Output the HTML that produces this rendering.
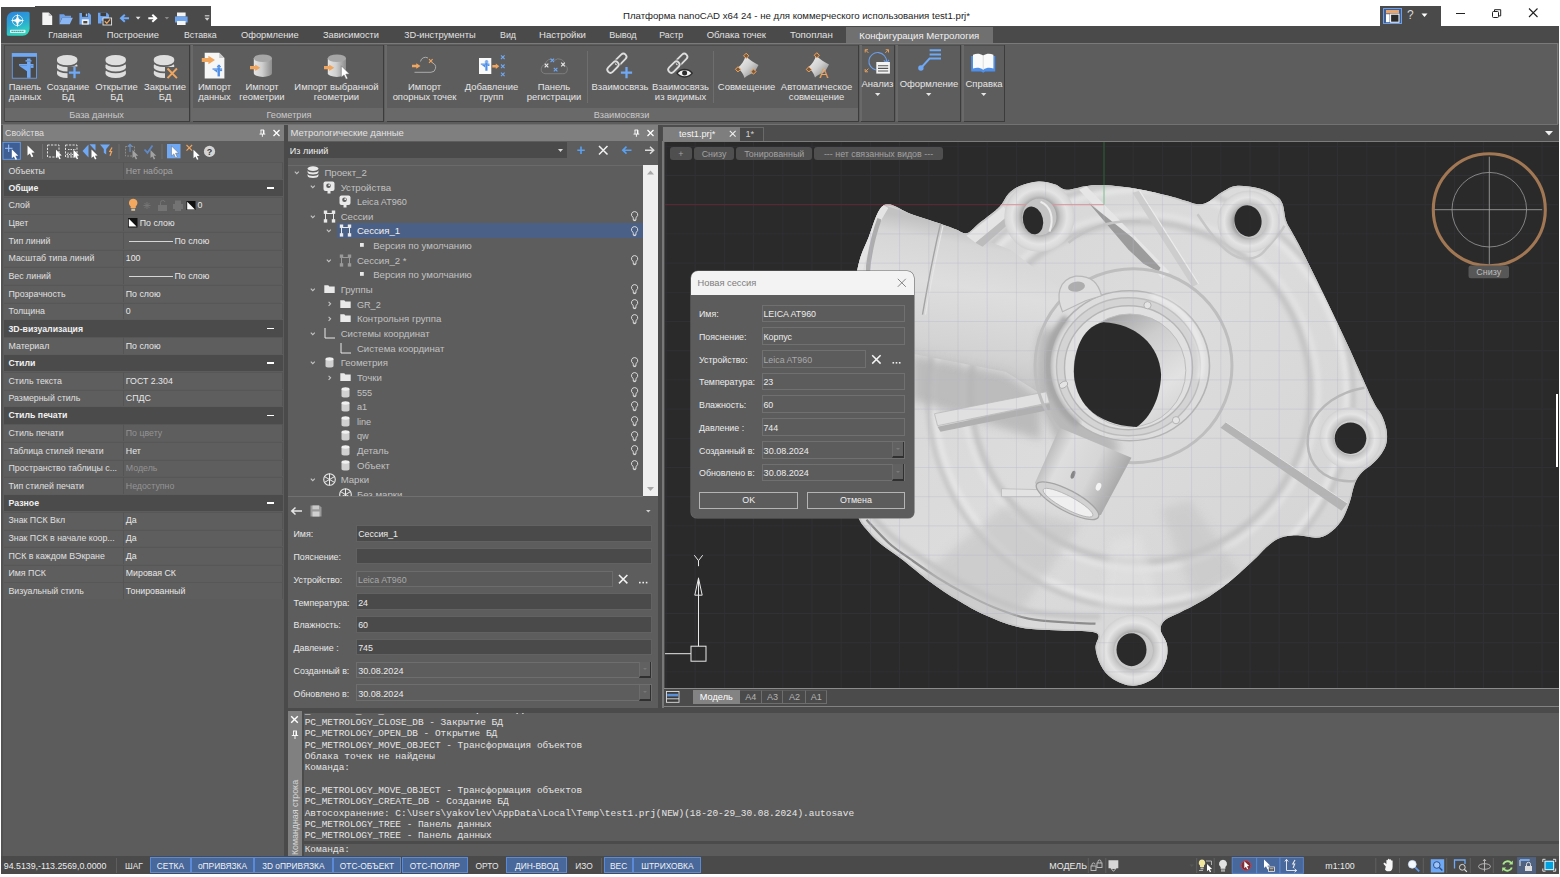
<!DOCTYPE html>
<html lang="ru"><head><meta charset="utf-8"><title>nanoCAD</title>
<style>
*{box-sizing:border-box;margin:0;padding:0}
html,body{width:1560px;height:877px;overflow:hidden;background:#fff}
body{position:relative;font-family:"Liberation Sans",sans-serif;font-size:9.5px;color:#e4e4e4;-webkit-font-smoothing:antialiased}
.a{position:absolute}
.t{position:absolute;white-space:nowrap;line-height:12px}
.c{text-align:center}
svg{position:absolute;overflow:visible}
</style></head>
<body>
<!-- p1_ribbon -->
<div class="a" style="left:1px;top:6px;width:1559px;height:868.4px;background:#4a4a4a;"></div>
<div class="a" style="left:211px;top:0px;width:1349px;height:26px;background:#fff;"></div>
<div class="a" style="left:0px;top:0px;width:1560px;height:5.5px;background:#fff;"></div>
<div class="a" style="left:0px;top:5px;width:35px;height:1.5px;background:#fff;"></div>
<div class="a" style="left:1380px;top:5.5px;width:61px;height:21px;background:#4a4a4a;"></div>
<div class="a" style="left:1383px;top:8px;width:19px;height:16px;background:#3f5f94;border:1px solid #6d9ee6"></div>
<svg style="left:1385px;top:9px" width="15" height="14" viewBox="0 0 15 14"><rect x="1" y="1" width="13" height="3.4" fill="#e9a56a"/><rect x="1" y="5.2" width="3.6" height="8" fill="#fff"/><rect x="5.6" y="5.2" width="8.4" height="8" fill="#2c2c2c" stroke="#fff" stroke-width="1"/></svg>
<div class="t" style="left:1407px;top:8.5px;font-size:12px;color:#d8d8d8;">?</div>
<svg style="left:1421px;top:13px" width="8" height="5"><path d="M0.5 0.5h6l-3 3.6z" fill="#fff"/></svg>
<svg style="left:1455px;top:7px" width="90" height="14"><path d="M1 6.5h9" stroke="#222" stroke-width="1"/><rect x="37.5" y="4.5" width="6" height="6" fill="none" stroke="#222" rx="1"/><path d="M39.5 4.3v-1.6h6.2v6.2h-1.8" fill="none" stroke="#222"/><path d="M74 1.5l8.5 8.5M82.5 1.5l-8.5 8.5" stroke="#222" stroke-width="1.1"/></svg>
<div class="t" style="left:546.5px;top:9.6px;width:500px;text-align:center;font-size:9.65px;color:#1c1c1c;">Платформа nanoCAD x64 24 - не для коммерческого использования test1.prj*</div>
<div class="a" style="left:845.7px;top:27px;width:147px;height:16.5px;background:#707070;"></div>
<div class="t" style="left:48.3px;top:29.3px;font-size:8.85px;color:#e2e2e2;">Главная</div>
<div class="t" style="left:106.7px;top:29.3px;font-size:9.39px;color:#e2e2e2;">Построение</div>
<div class="t" style="left:184px;top:29.3px;font-size:8.8px;color:#e2e2e2;">Вставка</div>
<div class="t" style="left:241px;top:29.3px;font-size:9.3px;color:#e2e2e2;">Оформление</div>
<div class="t" style="left:323px;top:29.3px;font-size:9.23px;color:#e2e2e2;">Зависимости</div>
<div class="t" style="left:404.3px;top:29.3px;font-size:9.29px;color:#e2e2e2;">3D-инструменты</div>
<div class="t" style="left:500px;top:29.3px;font-size:8.84px;color:#e2e2e2;">Вид</div>
<div class="t" style="left:539px;top:29.3px;font-size:9.59px;color:#e2e2e2;">Настройки</div>
<div class="t" style="left:609.3px;top:29.3px;font-size:9.06px;color:#e2e2e2;">Вывод</div>
<div class="t" style="left:659.3px;top:29.3px;font-size:8.8px;color:#e2e2e2;">Растр</div>
<div class="t" style="left:706.7px;top:29.3px;font-size:9.51px;color:#e2e2e2;">Облака точек</div>
<div class="t" style="left:790px;top:29.3px;font-size:9.7px;color:#e2e2e2;">Топоплан</div>
<div class="t" style="left:859.3px;top:29.5px;font-size:9.59px;color:#f2f2f2;">Конфигурация Метрология</div>
<div class="a" style="left:1px;top:43px;width:1559px;height:81px;background:#5d5d5d;"></div>
<div class="a" style="left:1px;top:43px;width:1557px;height:1px;background:#7a7a7a;"></div>
<div class="a" style="left:1556.9px;top:43px;width:1px;height:81.5px;background:#7a7a7a;"></div>
<div class="a" style="left:1px;top:123.5px;width:1557px;height:1.4px;background:#727272;"></div>
<div class="a" style="left:1px;top:124.9px;width:1559px;height:0.6px;background:#4c4c4c;"></div>
<div class="a" style="left:4px;top:44.5px;width:186.2px;height:77.8px;background:#5d5d5d;"></div>
<div class="a" style="left:4px;top:108.3px;width:186.2px;height:12.5px;background:#696969;"></div>
<div class="a" style="left:4px;top:44.5px;width:186.2px;height:1px;background:#4e4e4e;"></div>
<div class="a" style="left:189.0px;top:44.5px;width:1.2px;height:77.8px;background:#3c3c3c;"></div>
<div class="a" style="left:4px;top:120.8px;width:186.2px;height:1.5px;background:#3c3c3c;"></div>
<div class="a" style="left:3.5px;top:44.5px;width:1px;height:77.8px;background:#4a4a4a;"></div>
<div class="a" style="left:192.6px;top:44.5px;width:191.6px;height:77.8px;background:#5d5d5d;"></div>
<div class="a" style="left:192.6px;top:108.3px;width:191.6px;height:12.5px;background:#696969;"></div>
<div class="a" style="left:192.6px;top:44.5px;width:191.6px;height:1px;background:#4e4e4e;"></div>
<div class="a" style="left:383.0px;top:44.5px;width:1.2px;height:77.8px;background:#3c3c3c;"></div>
<div class="a" style="left:192.6px;top:120.8px;width:191.6px;height:1.5px;background:#3c3c3c;"></div>
<div class="a" style="left:191.2px;top:45px;width:2.2px;height:76px;background:#696969;"></div>
<div class="a" style="left:386.6px;top:44.5px;width:472.6px;height:77.8px;background:#5d5d5d;"></div>
<div class="a" style="left:386.6px;top:108.3px;width:472.6px;height:12.5px;background:#696969;"></div>
<div class="a" style="left:386.6px;top:44.5px;width:472.6px;height:1px;background:#4e4e4e;"></div>
<div class="a" style="left:858.0px;top:44.5px;width:1.2px;height:77.8px;background:#3c3c3c;"></div>
<div class="a" style="left:386.6px;top:120.8px;width:472.6px;height:1.5px;background:#3c3c3c;"></div>
<div class="a" style="left:385.20000000000005px;top:45px;width:2.2px;height:76px;background:#696969;"></div>
<div class="a" style="left:861.2px;top:44.5px;width:34.19999999999993px;height:77.8px;background:#5d5d5d;"></div>
<div class="a" style="left:861.2px;top:44.5px;width:34.19999999999993px;height:1px;background:#4e4e4e;"></div>
<div class="a" style="left:894.1999999999999px;top:44.5px;width:1.2px;height:77.8px;background:#3c3c3c;"></div>
<div class="a" style="left:861.2px;top:120.8px;width:34.19999999999993px;height:1.5px;background:#3c3c3c;"></div>
<div class="a" style="left:859.8000000000001px;top:45px;width:2.2px;height:76px;background:#696969;"></div>
<div class="a" style="left:897.6px;top:44.5px;width:63.799999999999955px;height:77.8px;background:#5d5d5d;"></div>
<div class="a" style="left:897.6px;top:44.5px;width:63.799999999999955px;height:1px;background:#4e4e4e;"></div>
<div class="a" style="left:960.1999999999999px;top:44.5px;width:1.2px;height:77.8px;background:#3c3c3c;"></div>
<div class="a" style="left:897.6px;top:120.8px;width:63.799999999999955px;height:1.5px;background:#3c3c3c;"></div>
<div class="a" style="left:896.2px;top:45px;width:2.2px;height:76px;background:#696969;"></div>
<div class="a" style="left:963.6px;top:44.5px;width:41.299999999999955px;height:77.8px;background:#5d5d5d;"></div>
<div class="a" style="left:963.6px;top:44.5px;width:41.299999999999955px;height:1px;background:#4e4e4e;"></div>
<div class="a" style="left:1003.6999999999999px;top:44.5px;width:1.2px;height:77.8px;background:#3c3c3c;"></div>
<div class="a" style="left:963.6px;top:120.8px;width:41.299999999999955px;height:1.5px;background:#3c3c3c;"></div>
<div class="a" style="left:962.2px;top:45px;width:2.2px;height:76px;background:#696969;"></div>
<div class="t" style="left:-3.5px;top:109px;width:200px;text-align:center;font-size:9.2px;color:#c9c9c9;">База данных</div>
<div class="t" style="left:189.0px;top:109px;width:200px;text-align:center;font-size:9.2px;color:#c9c9c9;">Геометрия</div>
<div class="t" style="left:521.5px;top:109px;width:200px;text-align:center;font-size:9.2px;color:#c9c9c9;">Взаимосвязи</div>
<div class="a" style="left:586.8px;top:51px;width:1px;height:52px;background:#6e6e6e;"></div>
<div class="a" style="left:712.5px;top:51px;width:1px;height:52px;background:#6e6e6e;"></div>
<div class="t" style="left:-75.0px;top:80.6px;width:200px;text-align:center;font-size:9.45px;color:#e6e6e6;">Панель</div>
<div class="t" style="left:-75.0px;top:91.4px;width:200px;text-align:center;font-size:9.45px;color:#e6e6e6;">данных</div>
<div class="t" style="left:-32.0px;top:80.6px;width:200px;text-align:center;font-size:9.45px;color:#e6e6e6;">Создание</div>
<div class="t" style="left:-32.0px;top:91.4px;width:200px;text-align:center;font-size:9.45px;color:#e6e6e6;">БД</div>
<div class="t" style="left:16.5px;top:80.6px;width:200px;text-align:center;font-size:9.45px;color:#e6e6e6;">Открытие</div>
<div class="t" style="left:16.5px;top:91.4px;width:200px;text-align:center;font-size:9.45px;color:#e6e6e6;">БД</div>
<div class="t" style="left:65.0px;top:80.6px;width:200px;text-align:center;font-size:9.45px;color:#e6e6e6;">Закрытие</div>
<div class="t" style="left:65.0px;top:91.4px;width:200px;text-align:center;font-size:9.45px;color:#e6e6e6;">БД</div>
<div class="t" style="left:114.5px;top:80.6px;width:200px;text-align:center;font-size:9.45px;color:#e6e6e6;">Импорт</div>
<div class="t" style="left:114.5px;top:91.4px;width:200px;text-align:center;font-size:9.45px;color:#e6e6e6;">данных</div>
<div class="t" style="left:162.0px;top:80.6px;width:200px;text-align:center;font-size:9.45px;color:#e6e6e6;">Импорт</div>
<div class="t" style="left:162.0px;top:91.4px;width:200px;text-align:center;font-size:9.45px;color:#e6e6e6;">геометрии</div>
<div class="t" style="left:236.5px;top:80.6px;width:200px;text-align:center;font-size:9.45px;color:#e6e6e6;">Импорт выбранной</div>
<div class="t" style="left:236.5px;top:91.4px;width:200px;text-align:center;font-size:9.45px;color:#e6e6e6;">геометрии</div>
<div class="t" style="left:324.5px;top:80.6px;width:200px;text-align:center;font-size:9.45px;color:#e6e6e6;">Импорт</div>
<div class="t" style="left:324.5px;top:91.4px;width:200px;text-align:center;font-size:9.45px;color:#e6e6e6;">опорных точек</div>
<div class="t" style="left:391.5px;top:80.6px;width:200px;text-align:center;font-size:9.45px;color:#e6e6e6;">Добавление</div>
<div class="t" style="left:391.5px;top:91.4px;width:200px;text-align:center;font-size:9.45px;color:#e6e6e6;">групп</div>
<div class="t" style="left:454.0px;top:80.6px;width:200px;text-align:center;font-size:9.45px;color:#e6e6e6;">Панель</div>
<div class="t" style="left:454.0px;top:91.4px;width:200px;text-align:center;font-size:9.45px;color:#e6e6e6;">регистрации</div>
<div class="t" style="left:520.0px;top:80.6px;width:200px;text-align:center;font-size:9.45px;color:#e6e6e6;">Взаимосвязь</div>
<div class="t" style="left:580.5px;top:80.6px;width:200px;text-align:center;font-size:9.45px;color:#e6e6e6;">Взаимосвязь</div>
<div class="t" style="left:580.5px;top:91.4px;width:200px;text-align:center;font-size:9.45px;color:#e6e6e6;">из видимых</div>
<div class="t" style="left:646.5px;top:80.6px;width:200px;text-align:center;font-size:9.45px;color:#e6e6e6;">Совмещение</div>
<div class="t" style="left:716.5px;top:80.6px;width:200px;text-align:center;font-size:9.45px;color:#e6e6e6;">Автоматическое</div>
<div class="t" style="left:716.5px;top:91.4px;width:200px;text-align:center;font-size:9.45px;color:#e6e6e6;">совмещение</div>
<div class="t" style="left:777.5px;top:77.6px;width:200px;text-align:center;font-size:9.45px;color:#e6e6e6;">Анализ</div>
<svg style="left:874.5px;top:92.5px" width="6" height="4"><path d="M0 0h5.4l-2.7 3z" fill="#e6e6e6"/></svg>
<div class="t" style="left:829.0px;top:77.6px;width:200px;text-align:center;font-size:9.45px;color:#e6e6e6;">Оформление</div>
<svg style="left:926px;top:92.5px" width="6" height="4"><path d="M0 0h5.4l-2.7 3z" fill="#e6e6e6"/></svg>
<div class="t" style="left:884.0px;top:77.6px;width:200px;text-align:center;font-size:9.45px;color:#e6e6e6;">Справка</div>
<svg style="left:981px;top:92.5px" width="6" height="4"><path d="M0 0h5.4l-2.7 3z" fill="#e6e6e6"/></svg>
<!-- p1b_icons -->
<svg style="left:0;top:0" width="1560" height="125" viewBox="0 0 1560 125">
<defs><linearGradient id="gcyl" x1="0" x2="1" y1="0" y2="0"><stop offset="0" stop-color="#e4e4e4"/><stop offset="0.45" stop-color="#d0d0d0"/><stop offset="1" stop-color="#8c8c8c"/></linearGradient><linearGradient id="gpatch" x1="0" x2="1" y1="0" y2="1"><stop offset="0" stop-color="#f6f6f6"/><stop offset="0.5" stop-color="#cfcfcf"/><stop offset="1" stop-color="#7c7c7c"/></linearGradient><linearGradient id="gapp" x1="0" x2="0.300" y1="0" y2="1"><stop offset="0" stop-color="#2d86de"/><stop offset="0.55" stop-color="#2aa6d4"/><stop offset="1" stop-color="#2fd6bf"/></linearGradient></defs>
<path d="M13.800 11.800h14.300a1.500 1.500 0 0 1 1.500 1.500v15.400a7 7 0 0 1 -7 7h-14.300a1.500 1.500 0 0 1 -1.500-1.500v-15.400a7 7 0 0 1 7-7z" fill="url(#gapp)"/>
<circle cx="17.500" cy="20.500" r="5.200" fill="none" stroke="#e8f6ff" stroke-width="0.8"/><path d="M17.500 13.500l1.300 5.700l5.700 1.300l-5.700 1.300l-1.300 5.700l-1.300-5.700l-5.700-1.300l5.700-1.300z" fill="#fff"/><circle cx="17.500" cy="20.500" r="2.200" fill="#fff"/>
<rect x="10" y="29.800" width="15.500" height="3.200" rx="0.800" fill="#d8f4ee"/><path d="M11.500 31.400h12.500" stroke="#2a8f9a" stroke-width="1.200" stroke-dasharray="1.300 0.700"/>
<path d="M42.300 12.500h6.400l3.500 3.500v8.900h-9.900z" fill="#f4f4f4"/><path d="M48.700 12.500v3.500h3.500z" fill="#bdbdbd"/>
<path d="M59.500 14.200h4.500l1.200 1.500h5.800v2h-9l-2.500 6z" fill="#6f9fe6"/><path d="M62.300 17.700h10.500l-3 6.600h-10.500z" fill="#8ab6f4"/>
<path d="M79.400 13h9.600l2 2v9.600h-11.600z" fill="#6fa4ee"/><rect x="82" y="13" width="6" height="3.800" fill="#3d3d3d"/><rect x="85.800" y="13.600" width="1.500" height="2.600" fill="#9cc2f6"/><rect x="81.800" y="19.300" width="7" height="5.300" fill="#f0f0f0"/><rect x="83.300" y="21" width="4" height="2.400" fill="#4a4a4a"/>
<path d="M98 12.700h9l2 2v6h-11z" fill="#6fa4ee"/><rect x="100.500" y="12.700" width="5.600" height="3.400" fill="#3d3d3d"/><rect x="98" y="16" width="3.500" height="7.500" fill="#6fa4ee"/><rect x="103" y="18" width="8.600" height="7" fill="#3d3d3d" stroke="#e8e8e8" stroke-width="0.9"/><path d="M104.800 21.300l2 2l3.300-4" stroke="#f1a65f" stroke-width="1.300" fill="none"/>
<path d="M129 18.300h-7.500M124.800 14.800l-3.800 3.500l3.800 3.500" stroke="#6fa8f5" stroke-width="2" fill="none"/><path d="M135.700 16.800h4.800l-2.400 2.800z" fill="#e4e4e4"/>
<path d="M148.300 18.300h7.500M152.300 14.800l3.800 3.500l-3.800 3.500" stroke="#ffffff" stroke-width="2" fill="none"/><path d="M164.700 16.900h4.400l-2.200 2.600z" fill="#8a8a8a"/>
<rect x="177" y="12.500" width="8.600" height="4" fill="#f4f4f4"/><rect x="175" y="16.500" width="12.600" height="6" fill="#6fa4ee"/><rect x="177" y="21" width="8.600" height="4" fill="#f4f4f4"/>
<path d="M204.800 15.800h4.600" stroke="#cfcfcf" stroke-width="1.200"/><path d="M204.600 17.800h5l-2.500 3z" fill="#cfcfcf"/>
<rect x="12.300" y="53.600" width="24.200" height="24.600" fill="#4a4a4a" stroke="#6a9de8" stroke-width="0.9"/><rect x="11.900" y="53.200" width="25" height="3.600" fill="#6fa8f5"/>
<g fill="#6fa8f5"><rect x="27" y="58.500" width="3.500" height="1.600"/><rect x="25.500" y="60.100" width="6" height="1.500"/><path d="M19 64h14.500v1.700h-14.500z"/><path d="M19 65.700h8v5.600z"/><path d="M30.500 65.700h3v2.200h-3z"/><rect x="27" y="61.600" width="3.600" height="16.200"/></g>
<path d="M56.7 73.0a10.500 4.400 0 0 1 21 0v2.200a10.500 4.400 0 0 1 -21 0z" fill="#5e5e5e"/><path d="M57 71.7a10.200 4.200 0 0 1 20.400 0v2a10.200 4.200 0 0 1 -20.400 0z" fill="#dedede"/><path d="M56.7 66.7a10.500 4.400 0 0 1 21 0v2.200a10.500 4.400 0 0 1 -21 0z" fill="#5e5e5e"/><path d="M57 65.4a10.200 4.200 0 0 1 20.400 0v2a10.200 4.200 0 0 1 -20.400 0z" fill="#dedede"/><path d="M56.7 60.4a10.500 4.400 0 0 1 21 0v2.200a10.500 4.400 0 0 1 -21 0z" fill="#5e5e5e"/><path d="M57 59.1a10.200 4.200 0 0 1 20.400 0v2a10.200 4.200 0 0 1 -20.400 0z" fill="#dedede"/>
<path d="M105.2 73.0a10.500 4.400 0 0 1 21 0v2.200a10.500 4.400 0 0 1 -21 0z" fill="#5e5e5e"/><path d="M105.5 71.7a10.200 4.200 0 0 1 20.400 0v2a10.200 4.200 0 0 1 -20.400 0z" fill="#dedede"/><path d="M105.2 66.7a10.500 4.400 0 0 1 21 0v2.200a10.500 4.400 0 0 1 -21 0z" fill="#5e5e5e"/><path d="M105.5 65.4a10.200 4.200 0 0 1 20.400 0v2a10.200 4.200 0 0 1 -20.400 0z" fill="#dedede"/><path d="M105.2 60.4a10.500 4.400 0 0 1 21 0v2.200a10.500 4.400 0 0 1 -21 0z" fill="#5e5e5e"/><path d="M105.5 59.1a10.200 4.200 0 0 1 20.400 0v2a10.200 4.200 0 0 1 -20.400 0z" fill="#dedede"/>
<path d="M153.5 73.0a10.500 4.400 0 0 1 21 0v2.200a10.500 4.400 0 0 1 -21 0z" fill="#5e5e5e"/><path d="M153.8 71.7a10.200 4.200 0 0 1 20.400 0v2a10.200 4.200 0 0 1 -20.400 0z" fill="#dedede"/><path d="M153.5 66.7a10.500 4.400 0 0 1 21 0v2.200a10.500 4.400 0 0 1 -21 0z" fill="#5e5e5e"/><path d="M153.8 65.4a10.200 4.200 0 0 1 20.400 0v2a10.200 4.200 0 0 1 -20.400 0z" fill="#dedede"/><path d="M153.5 60.4a10.500 4.400 0 0 1 21 0v2.200a10.500 4.400 0 0 1 -21 0z" fill="#5e5e5e"/><path d="M153.8 59.1a10.200 4.200 0 0 1 20.400 0v2a10.200 4.200 0 0 1 -20.400 0z" fill="#dedede"/>
<rect x="67.500" y="66.500" width="13" height="12" fill="#5e5e5e"/><path d="M74.500 67v11.200M68.900 72.600h11.200" stroke="#6fa8f5" stroke-width="2.300"/>
<rect x="165" y="67" width="13" height="12" fill="#5e5e5e"/><path d="M167.500 68.500l9.400 9.600M176.900 68.500l-9.400 9.600" stroke="#f1a65f" stroke-width="1.900"/>
<path d="M204.700 52.800h14.500l5.200 5.200v20.500h-19.700z" fill="#f6f6f6"/><path d="M219.200 52.800v5.200h5.200z" fill="#c8c8c8"/>
<path d="M201.8 57.936h6.6v-2.2359999999999998l6.6 4.3l-6.6 4.3v-2.2359999999999998h-6.6z" fill="#f1a65f"/>
<g transform="translate(212.5 64.8) scale(0.8)" fill="#4f8fe8"><rect x="6.500" y="0" width="3" height="1.600"/><rect x="5.500" y="1.600" width="5" height="1.400"/><path d="M0 4.500h12v1.600h-12z"/><path d="M1 6.100h5l-0 3.800z"/><path d="M9.300 6.100h2.700v1.800h-2.700z"/><rect x="6.300" y="3" width="3" height="11.500"/></g>
<path d="M253.8 58.3v15a9.100 3.600 0 0 0 18.200 0v-15z" fill="url(#gcyl)"/><ellipse cx="262.90000000000003" cy="58.3" rx="9.100" ry="3.800" fill="#a6a6a6"/>
<path d="M250 66.116h5.15v-1.716l5.15 3.3l-5.15 3.3v-1.716h-5.15z" fill="#f1a65f"/>
<path d="M327.8 58.3v15a9.100 3.600 0 0 0 18.200 0v-15z" fill="url(#gcyl)"/><ellipse cx="336.90000000000003" cy="58.3" rx="9.100" ry="3.800" fill="#a6a6a6"/>
<path d="M324 66.116h5.15v-1.716l5.15 3.3l-5.15 3.3v-1.716h-5.15z" fill="#f1a65f"/>
<path d="M341.300 65.800l0 11.500l2.700-2.400l2 4.300l1.800-0.800l-2-4.200l3.600-0.300z" fill="#ffffff" stroke="#5a5a5a" stroke-width="0.500"/>
<path d="M414.500 72.300h16.500a4.800 4.800 0 0 0 1.500-9.300M420.500 61.500a5 5 0 0 1 7.500-3.500" stroke="#b4b4b4" stroke-width="0.9" fill="none"/>
<path d="M412 64.656h4.25v-1.456l4.25 2.8l-4.25 2.8v-1.456h-4.25z" fill="#f1a65f"/>
<path d="M429.0 59.2l3.6 3.6M432.6 59.2l-3.6 3.6" stroke="#f1a65f" stroke-width="1.1" fill="none"/>
<rect x="479" y="58" width="12.300" height="16" fill="#fafafa"/>
<g transform="translate(480.8 60.3) scale(0.72)" fill="#4f8fe8"><rect x="6.500" y="0" width="3" height="1.600"/><rect x="5.500" y="1.600" width="5" height="1.400"/><path d="M0 4.500h12v1.600h-12z"/><path d="M1 6.100h5l-0 3.800z"/><path d="M9.300 6.100h2.700v1.800h-2.700z"/><rect x="6.300" y="3" width="3" height="11.500"/></g>
<path d="M492.3 64.904h3.5v-1.4040000000000001l3.5 2.7l-3.5 2.7v-1.4040000000000001h-3.5z" fill="#f1a65f"/>
<path d="M501.0 55.400000000000006l3.6 3.6M504.6 55.400000000000006l-3.6 3.6" stroke="#6fa8f5" stroke-width="1.1" fill="none"/>
<path d="M501.0 64.5l3.6 3.6M504.6 64.5l-3.6 3.6" stroke="#6fa8f5" stroke-width="1.1" fill="none"/>
<path d="M501.0 72.60000000000001l3.6 3.6M504.6 72.60000000000001l-3.6 3.6" stroke="#6fa8f5" stroke-width="1.1" fill="none"/>
<path d="M545 73.700h17.500a4.300 4.300 0 0 0 2-8.300a6 6 0 0 0 -10-5a5.500 5.500 0 0 0 -9 4a4.700 4.700 0 0 0 -0.500 9.300z" stroke="#858585" stroke-width="0.8" fill="none"/>
<path d="M550.5 58.6l3.6 3.6M554.0999999999999 58.6l-3.6 3.6" stroke="#6fa8f5" stroke-width="1.1" fill="none"/>
<path d="M553.8000000000001 67.8l3.6 3.6M557.4 67.8l-3.6 3.6" stroke="#6fa8f5" stroke-width="1.1" fill="none"/>
<path d="M544.7 63.7l3.6 3.6M548.3 63.7l-3.6 3.6" stroke="#ececec" stroke-width="1.1" fill="none"/>
<path d="M561.2 62.7l3.6 3.6M564.8 62.7l-3.6 3.6" stroke="#ececec" stroke-width="1.1" fill="none"/>
<rect x="614.0999999999999" y="56.2" width="13.400" height="6.200" rx="3.100" transform="rotate(-45 620.8 59.300000000000004)" fill="none" stroke="#dedede" stroke-width="1.8"/><rect x="606.3" y="64.00000000000001" width="13.400" height="6.200" rx="3.100" transform="rotate(-45 613.0 67.10000000000001)" fill="none" stroke="#5d5d5d" stroke-width="3.8"/><rect x="606.3" y="64.00000000000001" width="13.400" height="6.200" rx="3.100" transform="rotate(-45 613.0 67.10000000000001)" fill="none" stroke="#dedede" stroke-width="1.8"/>
<rect x="620" y="66.500" width="13" height="12" fill="#5e5e5e" opacity="0"/><path d="M626.500 67v11.200M620.900 72.600h11.200" stroke="#6fa8f5" stroke-width="2.300"/>
<rect x="674.9999999999999" y="56.2" width="13.400" height="6.200" rx="3.100" transform="rotate(-45 681.6999999999999 59.300000000000004)" fill="none" stroke="#dedede" stroke-width="1.8"/><rect x="667.1999999999999" y="64.00000000000001" width="13.400" height="6.200" rx="3.100" transform="rotate(-45 673.9 67.10000000000001)" fill="none" stroke="#5d5d5d" stroke-width="3.8"/><rect x="667.1999999999999" y="64.00000000000001" width="13.400" height="6.200" rx="3.100" transform="rotate(-45 673.9 67.10000000000001)" fill="none" stroke="#dedede" stroke-width="1.8"/>
<path d="M677 73.200c3.500-5 11.700-5 15.200 0c-3.500 5-11.700 5-15.200 0z" fill="#f2f2f2" stroke="#2c2c2c" stroke-width="1.400"/><circle cx="684.600" cy="73" r="2.500" fill="#2c2c2c"/>
<path d="M745.5 56C749.5 60 754.5 63 758.5 65C756.5 69 754.5 72 753.5 73C749.5 74 746.5 76 744.5 78C743.5 74 740.5 70 737.5 68C741.5 65 744.5 60 745.5 56z" fill="url(#gpatch)"/>
<path d="M746.2 53.199999999999996l2.6 2.6l-2.6 2.6l-2.6 -2.6z" fill="#7a5a3c" stroke="#f1a65f" stroke-width="1"/>
<path d="M738 66.7l2.6 2.6l-2.6 2.6l-2.6 -2.6z" fill="#7a5a3c" stroke="#f1a65f" stroke-width="1"/>
<path d="M753.5 69.0l2.6 2.6l-2.6 2.6l-2.6 -2.6z" fill="#7a5a3c" stroke="#f1a65f" stroke-width="1"/>
<path d="M816 55.5C820 59.5 825 62.5 829 64.5C827 68.5 825 71.5 824 72.5C820 73.5 817 75.5 815 77.5C814 73.5 811 69.5 808 67.5C812 64.5 815 59.5 816 55.5z" fill="url(#gpatch)"/>
<path d="M816.8 52.699999999999996l2.6 2.6l-2.6 2.6l-2.6 -2.6z" fill="#7a5a3c" stroke="#f1a65f" stroke-width="1"/>
<path d="M808.8 66.80000000000001l2.6 2.6l-2.6 2.6l-2.6 -2.6z" fill="#7a5a3c" stroke="#f1a65f" stroke-width="1"/>
<text x="819.200" y="77.800" font-family="Liberation Sans, sans-serif" font-size="13.500" fill="#f1a65f">A</text>
<path d="M876 70a8.800 8.800 0 1 1 10.500-8" stroke="#6a9de8" stroke-width="1.100" fill="none"/><path d="M883.800 60.300l2.800 2.600l2.400-3" stroke="#6a9de8" stroke-width="1.100" fill="none"/>
<rect x="876.300" y="62" width="13.600" height="11.600" fill="#f4f4f4"/><path d="M878 65.800h10.200M878 68.400h10.200M878 71h10.200" stroke="#555" stroke-width="1.100"/>
<path d="M865.200 52.500v-2.800h2.800M865.400 49.900l3 3M888.500 52.500v-2.800h-2.800M888.300 49.900l-3 3M865.200 69v2.800h2.800M865.400 71.600l3-3" stroke="#f1a65f" stroke-width="0.9" fill="none"/>
<circle cx="920.900" cy="68" r="2.700" fill="#6fa8f5"/><path d="M920.900 68l8.700-9.500h11.400M929.600 50.300h11.400M929.600 54.500h11.400" stroke="#6fa8f5" stroke-width="1.900" fill="none"/>
<path d="M971.200 56h24v15.500h-10l-2 1.300l-2-1.300h-10z" fill="#4f8fe8"/><path d="M973 54.800c3.500-1.800 7-1.500 10.200 0.800c3.200-2.300 6.700-2.600 10.200-0.800v13.800c-3.500-1.200-7-1-10.200 1.200c-3.200-2.200-6.700-2.400-10.200-1.200z" fill="#fafafa"/><path d="M983.200 55.600v14" stroke="#cfcfcf" stroke-width="0.700"/>
</svg>
<!-- p2_props -->
<div class="a" style="left:1px;top:125.2px;width:283px;height:731px;background:#5c5c5c;"></div>
<div class="a" style="left:1px;top:125.2px;width:1.8px;height:731px;background:#525252;"></div>
<div class="a" style="left:2.5px;top:125.2px;width:281.5px;height:15.8px;background:#7f7f7f;"></div>
<div class="t" style="left:5px;top:127.4px;font-size:8.9px;color:#dedede;">Свойства</div>
<svg style="left:257px;top:128px" width="24" height="11"><path d="M3.600 2h3.400M4 2v4M6.800 2v4M2.500 6.100h5.800M5.400 6.100v2.700" stroke="#fff" stroke-width="0.9" fill="none"/><rect x="5.900" y="2.200" width="1.300" height="3.800" fill="#fff"/><path d="M16.5 2l6 6M22.5 2l-6 6" stroke="#fff" stroke-width="1.3"/></svg>
<div class="a" style="left:3px;top:141px;width:281px;height:20.5px;background:#5c5c5c;"></div>
<div class="a" style="left:3px;top:161.5px;width:281px;height:694px;background:#5c5c5c;"></div>
<div class="a" style="left:3.5px;top:162.1px;width:279.1px;height:16.75px;background:#5e5e5e;border-top:1px solid #575757;border-right:1px solid #545454"></div>
<div class="a" style="left:122.5px;top:162.1px;width:1px;height:16.75px;background:#555;"></div>
<div class="t" style="left:8.5px;top:164.7px;font-size:8.8px;color:#e0e0e0;">Объекты</div>
<div class="t" style="left:125.8px;top:164.7px;font-size:8.8px;color:#a4a4a4;">Нет набора</div>
<div class="a" style="left:3.5px;top:179.65px;width:279.1px;height:16.5px;background:#4b4b4b;"></div>
<div class="t" style="left:8.5px;top:181.95000000000002px;font-size:8.75px;color:#f0f0f0;font-weight:bold">Общие</div>
<div class="a" style="left:267px;top:187.15px;width:7px;height:1.4px;background:#fff;"></div>
<div class="a" style="left:3.5px;top:196.75px;width:279.1px;height:16.75px;background:#5e5e5e;border-top:1px solid #575757;border-right:1px solid #545454"></div>
<div class="a" style="left:122.5px;top:196.75px;width:1px;height:16.75px;background:#555;"></div>
<div class="t" style="left:8.5px;top:199.35px;font-size:8.8px;color:#e0e0e0;">Слой</div>
<svg style="left:127px;top:198.275px" width="80" height="14" viewBox="0 0 80 14"><path d="M6.2 0.8a4.2 4.2 0 0 1 2.6 7.5v1.6h-5.2v-1.6a4.2 4.2 0 0 1 2.6-7.5z" fill="#f3a85f"/><rect x="4.3" y="10.6" width="3.8" height="2.2" fill="#d8c09a"/><path d="M20 4v7M16.5 7.5h7M17.5 5l5 5M22.500 5l-5 5" stroke="#777" stroke-width="0.9"/><rect x="31" y="7" width="9" height="6" fill="#747474"/><path d="M33.500 7v-2.500a2.300 2.300 0 0 1 4.500-0.500" stroke="#747474" fill="none"/><rect x="46" y="6" width="10" height="5" fill="#737373"/><rect x="48" y="2.500" width="6" height="10.500" fill="#737373"/><rect x="59.500" y="3" width="9" height="9" fill="#111"/><path d="M60.200 3.700l7.800 7.800h-7.800z" fill="#fff"/></svg>
<div class="t" style="left:197.5px;top:199.35px;font-size:8.8px;color:#e8e8e8;">0</div>
<div class="a" style="left:3.5px;top:214.4px;width:279.1px;height:16.75px;background:#5e5e5e;border-top:1px solid #575757;border-right:1px solid #545454"></div>
<div class="a" style="left:122.5px;top:214.4px;width:1px;height:16.75px;background:#555;"></div>
<div class="t" style="left:8.5px;top:217.0px;font-size:8.8px;color:#e0e0e0;">Цвет</div>
<svg style="left:128px;top:218.425px" width="10" height="10"><rect x="0" y="0" width="9.500" height="9.500" fill="#111"/><path d="M0.800 0.800l7.800 7.800h-7.800z" fill="#fff"/></svg>
<div class="t" style="left:139.8px;top:217.0px;font-size:8.8px;color:#e8e8e8;">По слою</div>
<div class="a" style="left:3.5px;top:232.05px;width:279.1px;height:16.75px;background:#5e5e5e;border-top:1px solid #575757;border-right:1px solid #545454"></div>
<div class="a" style="left:122.5px;top:232.05px;width:1px;height:16.75px;background:#555;"></div>
<div class="t" style="left:8.5px;top:234.65px;font-size:8.8px;color:#e0e0e0;">Тип линий</div>
<div class="a" style="left:128.5px;top:240.57500000000002px;width:44.5px;height:1px;background:#d6d6d6;"></div>
<div class="t" style="left:174.5px;top:234.65px;font-size:8.8px;color:#e8e8e8;">По слою</div>
<div class="a" style="left:3.5px;top:249.70000000000002px;width:279.1px;height:16.75px;background:#5e5e5e;border-top:1px solid #575757;border-right:1px solid #545454"></div>
<div class="a" style="left:122.5px;top:249.70000000000002px;width:1px;height:16.75px;background:#555;"></div>
<div class="t" style="left:8.5px;top:252.3px;font-size:8.8px;color:#e0e0e0;">Масштаб типа линий</div>
<div class="t" style="left:125.8px;top:252.3px;font-size:8.8px;color:#e8e8e8;">100</div>
<div class="a" style="left:3.5px;top:267.35px;width:279.1px;height:16.75px;background:#5e5e5e;border-top:1px solid #575757;border-right:1px solid #545454"></div>
<div class="a" style="left:122.5px;top:267.35px;width:1px;height:16.75px;background:#555;"></div>
<div class="t" style="left:8.5px;top:269.95px;font-size:8.8px;color:#e0e0e0;">Вес линий</div>
<div class="a" style="left:128.5px;top:275.875px;width:44.5px;height:1px;background:#d6d6d6;"></div>
<div class="t" style="left:174.5px;top:269.95px;font-size:8.8px;color:#e8e8e8;">По слою</div>
<div class="a" style="left:3.5px;top:285.0px;width:279.1px;height:16.75px;background:#5e5e5e;border-top:1px solid #575757;border-right:1px solid #545454"></div>
<div class="a" style="left:122.5px;top:285.0px;width:1px;height:16.75px;background:#555;"></div>
<div class="t" style="left:8.5px;top:287.59999999999997px;font-size:8.8px;color:#e0e0e0;">Прозрачность</div>
<div class="t" style="left:125.8px;top:287.59999999999997px;font-size:8.8px;color:#e8e8e8;">По слою</div>
<div class="a" style="left:3.5px;top:302.65px;width:279.1px;height:16.75px;background:#5e5e5e;border-top:1px solid #575757;border-right:1px solid #545454"></div>
<div class="a" style="left:122.5px;top:302.65px;width:1px;height:16.75px;background:#555;"></div>
<div class="t" style="left:8.5px;top:305.24999999999994px;font-size:8.8px;color:#e0e0e0;">Толщина</div>
<div class="t" style="left:125.8px;top:305.24999999999994px;font-size:8.8px;color:#e8e8e8;">0</div>
<div class="a" style="left:3.5px;top:320.19999999999993px;width:279.1px;height:16.5px;background:#4b4b4b;"></div>
<div class="t" style="left:8.5px;top:322.49999999999994px;font-size:8.75px;color:#f0f0f0;font-weight:bold">3D-визуализация</div>
<div class="a" style="left:267px;top:327.69999999999993px;width:7px;height:1.4px;background:#fff;"></div>
<div class="a" style="left:3.5px;top:337.29999999999995px;width:279.1px;height:16.75px;background:#5e5e5e;border-top:1px solid #575757;border-right:1px solid #545454"></div>
<div class="a" style="left:122.5px;top:337.29999999999995px;width:1px;height:16.75px;background:#555;"></div>
<div class="t" style="left:8.5px;top:339.8999999999999px;font-size:8.8px;color:#e0e0e0;">Материал</div>
<div class="t" style="left:125.8px;top:339.8999999999999px;font-size:8.8px;color:#e8e8e8;">По слою</div>
<div class="a" style="left:3.5px;top:354.8499999999999px;width:279.1px;height:16.5px;background:#4b4b4b;"></div>
<div class="t" style="left:8.5px;top:357.1499999999999px;font-size:8.75px;color:#f0f0f0;font-weight:bold">Стили</div>
<div class="a" style="left:267px;top:362.3499999999999px;width:7px;height:1.4px;background:#fff;"></div>
<div class="a" style="left:3.5px;top:371.94999999999993px;width:279.1px;height:16.75px;background:#5e5e5e;border-top:1px solid #575757;border-right:1px solid #545454"></div>
<div class="a" style="left:122.5px;top:371.94999999999993px;width:1px;height:16.75px;background:#555;"></div>
<div class="t" style="left:8.5px;top:374.5499999999999px;font-size:8.8px;color:#e0e0e0;">Стиль текста</div>
<div class="t" style="left:125.8px;top:374.5499999999999px;font-size:8.8px;color:#e8e8e8;">ГОСТ 2.304</div>
<div class="a" style="left:3.5px;top:389.5999999999999px;width:279.1px;height:16.75px;background:#5e5e5e;border-top:1px solid #575757;border-right:1px solid #545454"></div>
<div class="a" style="left:122.5px;top:389.5999999999999px;width:1px;height:16.75px;background:#555;"></div>
<div class="t" style="left:8.5px;top:392.1999999999999px;font-size:8.8px;color:#e0e0e0;">Размерный стиль</div>
<div class="t" style="left:125.8px;top:392.1999999999999px;font-size:8.8px;color:#e8e8e8;">СПДС</div>
<div class="a" style="left:3.5px;top:407.14999999999986px;width:279.1px;height:16.5px;background:#4b4b4b;"></div>
<div class="t" style="left:8.5px;top:409.4499999999999px;font-size:8.75px;color:#f0f0f0;font-weight:bold">Стиль печати</div>
<div class="a" style="left:267px;top:414.64999999999986px;width:7px;height:1.4px;background:#fff;"></div>
<div class="a" style="left:3.5px;top:424.2499999999999px;width:279.1px;height:16.75px;background:#5e5e5e;border-top:1px solid #575757;border-right:1px solid #545454"></div>
<div class="a" style="left:122.5px;top:424.2499999999999px;width:1px;height:16.75px;background:#555;"></div>
<div class="t" style="left:8.5px;top:426.84999999999985px;font-size:8.8px;color:#e0e0e0;">Стиль печати</div>
<div class="t" style="left:125.8px;top:426.84999999999985px;font-size:8.8px;color:#949494;">По цвету</div>
<div class="a" style="left:3.5px;top:441.89999999999986px;width:279.1px;height:16.75px;background:#5e5e5e;border-top:1px solid #575757;border-right:1px solid #545454"></div>
<div class="a" style="left:122.5px;top:441.89999999999986px;width:1px;height:16.75px;background:#555;"></div>
<div class="t" style="left:8.5px;top:444.49999999999983px;font-size:8.8px;color:#e0e0e0;">Таблица стилей печати</div>
<div class="t" style="left:125.8px;top:444.49999999999983px;font-size:8.8px;color:#e8e8e8;">Нет</div>
<div class="a" style="left:3.5px;top:459.54999999999984px;width:279.1px;height:16.75px;background:#5e5e5e;border-top:1px solid #575757;border-right:1px solid #545454"></div>
<div class="a" style="left:122.5px;top:459.54999999999984px;width:1px;height:16.75px;background:#555;"></div>
<div class="t" style="left:8.5px;top:462.1499999999998px;font-size:8.8px;color:#e0e0e0;">Пространство таблицы с...</div>
<div class="t" style="left:125.8px;top:462.1499999999998px;font-size:8.8px;color:#949494;">Модель</div>
<div class="a" style="left:3.5px;top:477.1999999999998px;width:279.1px;height:16.75px;background:#5e5e5e;border-top:1px solid #575757;border-right:1px solid #545454"></div>
<div class="a" style="left:122.5px;top:477.1999999999998px;width:1px;height:16.75px;background:#555;"></div>
<div class="t" style="left:8.5px;top:479.7999999999998px;font-size:8.8px;color:#e0e0e0;">Тип стилей печати</div>
<div class="t" style="left:125.8px;top:479.7999999999998px;font-size:8.8px;color:#949494;">Недоступно</div>
<div class="a" style="left:3.5px;top:494.7499999999998px;width:279.1px;height:16.5px;background:#4b4b4b;"></div>
<div class="t" style="left:8.5px;top:497.0499999999998px;font-size:8.75px;color:#f0f0f0;font-weight:bold">Разное</div>
<div class="a" style="left:267px;top:502.2499999999998px;width:7px;height:1.4px;background:#fff;"></div>
<div class="a" style="left:3.5px;top:511.8499999999998px;width:279.1px;height:16.75px;background:#5e5e5e;border-top:1px solid #575757;border-right:1px solid #545454"></div>
<div class="a" style="left:122.5px;top:511.8499999999998px;width:1px;height:16.75px;background:#555;"></div>
<div class="t" style="left:8.5px;top:514.4499999999998px;font-size:8.8px;color:#e0e0e0;">Знак ПСК Вкл</div>
<div class="t" style="left:125.8px;top:514.4499999999998px;font-size:8.8px;color:#e8e8e8;">Да</div>
<div class="a" style="left:3.5px;top:529.4999999999998px;width:279.1px;height:16.75px;background:#5e5e5e;border-top:1px solid #575757;border-right:1px solid #545454"></div>
<div class="a" style="left:122.5px;top:529.4999999999998px;width:1px;height:16.75px;background:#555;"></div>
<div class="t" style="left:8.5px;top:532.0999999999998px;font-size:8.8px;color:#e0e0e0;">Знак ПСК в начале коор...</div>
<div class="t" style="left:125.8px;top:532.0999999999998px;font-size:8.8px;color:#e8e8e8;">Да</div>
<div class="a" style="left:3.5px;top:547.1499999999997px;width:279.1px;height:16.75px;background:#5e5e5e;border-top:1px solid #575757;border-right:1px solid #545454"></div>
<div class="a" style="left:122.5px;top:547.1499999999997px;width:1px;height:16.75px;background:#555;"></div>
<div class="t" style="left:8.5px;top:549.7499999999998px;font-size:8.8px;color:#e0e0e0;">ПСК в каждом ВЭкране</div>
<div class="t" style="left:125.8px;top:549.7499999999998px;font-size:8.8px;color:#e8e8e8;">Да</div>
<div class="a" style="left:3.5px;top:564.7999999999997px;width:279.1px;height:16.75px;background:#5e5e5e;border-top:1px solid #575757;border-right:1px solid #545454"></div>
<div class="a" style="left:122.5px;top:564.7999999999997px;width:1px;height:16.75px;background:#555;"></div>
<div class="t" style="left:8.5px;top:567.3999999999997px;font-size:8.8px;color:#e0e0e0;">Имя ПСК</div>
<div class="t" style="left:125.8px;top:567.3999999999997px;font-size:8.8px;color:#e8e8e8;">Мировая СК</div>
<div class="a" style="left:3.5px;top:582.4499999999997px;width:279.1px;height:16.75px;background:#5e5e5e;border-top:1px solid #575757;border-right:1px solid #545454"></div>
<div class="a" style="left:122.5px;top:582.4499999999997px;width:1px;height:16.75px;background:#555;"></div>
<div class="t" style="left:8.5px;top:585.0499999999997px;font-size:8.8px;color:#e0e0e0;">Визуальный стиль</div>
<div class="t" style="left:125.8px;top:585.0499999999997px;font-size:8.8px;color:#e8e8e8;">Тонированный</div>
<!-- p2b_ptool -->
<svg style="left:0;top:138px" width="230" height="28" viewBox="0 138 230 28">
<rect x="3" y="142.300" width="17.300" height="17" fill="#3f5f94" stroke="#6a9de8" stroke-width="0.9"/>
<path d="M8.700 144.500v7.500M5 148.300h7.500" stroke="#9cc4ff" stroke-width="1"/>
<path transform="translate(11.8 149.3) scale(0.95)" d="M0 0v9.500l2.200-2l1.700 3.600l1.600-0.700l-1.700-3.500l3-0.200z" fill="#ffffff"/>
<path transform="translate(27.5 145.5) scale(1.05)" d="M0 0v9.500l2.200-2l1.700 3.600l1.600-0.700l-1.700-3.500l3-0.200z" fill="#ffffff"/>
<path d="M42.5 144v15" stroke="#6e6e6e" stroke-width="1"/>
<path d="M119 144v15" stroke="#6e6e6e" stroke-width="1"/>
<path d="M162 144v15" stroke="#6e6e6e" stroke-width="1"/>
<rect x="47.500" y="145" width="11.500" height="12" fill="none" stroke="#e0e0e0" stroke-width="1" stroke-dasharray="2.200 1.300"/>
<path transform="translate(56 149.8) scale(0.85)" d="M0 0v9.500l2.200-2l1.700 3.600l1.600-0.700l-1.700-3.500l3-0.200z" fill="#ffffff"/>
<rect x="65.500" y="145" width="11.500" height="12" fill="none" stroke="#e0e0e0" stroke-width="1" stroke-dasharray="2.200 1.300"/><path d="M68 149.500h8M68 152.500v4M71 152.500v4M66.500 154.500h8" stroke="#d8d8d8" stroke-width="1.100" stroke-dasharray="1.500 1"/>
<path transform="translate(73.5 149.8) scale(0.85)" d="M0 0v9.500l2.200-2l1.700 3.600l1.600-0.700l-1.700-3.500l3-0.200z" fill="#ffffff"/>
<path d="M82.500 151l6-6.500v13z" fill="#6fa8f5"/><path d="M89.500 144.300h6v6.500z" fill="#6fa8f5"/><path d="M83 157.500h7l-7-6.800z" fill="#6fa8f5" opacity="0"/><path d="M89.500 158v-6.500l-6 6.500z" fill="#6fa8f5" opacity="0"/>
<path transform="translate(91.5 149.5) scale(0.9)" d="M0 0v9.500l2.200-2l1.700 3.600l1.600-0.700l-1.700-3.500l3-0.200z" fill="#ffffff"/>
<path d="M100 144.500h10l-3.800 4.500v5.500l-2.400-1.800v-3.700z" fill="#6fa8f5"/><path d="M112 147.500l-2.200 4h1.800l-1.600 4.300" stroke="#f1a65f" stroke-width="1.200" fill="none"/>
<rect x="125.500" y="146.500" width="9" height="9.500" fill="none" stroke="#8c8c8c" stroke-width="1" stroke-dasharray="1.800 1.200"/><path d="M130 152v-7.500M128 146.500l2-2.200l2 2.200" stroke="#6a8fc4" stroke-width="1.200" fill="none"/>
<path transform="translate(132.5 150) scale(0.85)" d="M0 0v9.500l2.200-2l1.700 3.600l1.600-0.700l-1.700-3.500l3-0.200z" fill="#a2a2a2"/>
<path d="M144.500 149.500l3 3.200l5-7.200" stroke="#5f89c6" stroke-width="1.800" fill="none"/>
<path transform="translate(150.5 150) scale(0.85)" d="M0 0v9.500l2.200-2l1.700 3.600l1.600-0.700l-1.700-3.500l3-0.200z" fill="#a2a2a2"/>
<rect x="167" y="144" width="13.500" height="14.300" fill="#6fa8f5"/>
<path transform="translate(171.5 146) scale(1.05)" d="M0 0v9.500l2.200-2l1.700 3.600l1.600-0.700l-1.700-3.500l3-0.200z" fill="#ffffff"/>
<path d="M171.500 146v9.975l2.310-2.100l1.785 3.780l1.680-0.735l-1.785-3.675l3.150-0.210z" fill="none" stroke="#666" stroke-width="0.500"/>
<path d="M186.500 145l5.600 5.600M192.100 145l-5.600 5.600" stroke="#f1a65f" stroke-width="1.100"/>
<path transform="translate(193.5 149.8) scale(0.9)" d="M0 0v9.500l2.200-2l1.700 3.600l1.600-0.700l-1.700-3.500l3-0.200z" fill="#ffffff"/>
<circle cx="209.500" cy="151.400" r="5.600" fill="#d4d4d4"/><text x="209.500" y="154.700" font-size="9" font-weight="bold" text-anchor="middle" fill="#3a3a3a" font-family="Liberation Sans, sans-serif">?</text>
</svg>
<!-- p3_metro -->
<div class="a" style="left:287.7px;top:125.2px;width:370.6px;height:582.7px;background:#5d5d5d;"></div>
<div class="a" style="left:287.7px;top:125.2px;width:371px;height:15.8px;background:#7f7f7f;"></div>
<div class="t" style="left:290.6px;top:127.3px;font-size:9.5px;color:#e2e2e2;">Метрологические данные</div>
<svg style="left:631px;top:128px" width="26" height="11"><path d="M3.600 2h3.400M4 2v4M6.800 2v4M2.500 6.100h5.800M5.400 6.100v2.700" stroke="#fff" stroke-width="0.9" fill="none"/><rect x="5.900" y="2.200" width="1.300" height="3.800" fill="#fff"/><path d="M16.500 2l6 6M22.500 2l-6 6" stroke="#fff" stroke-width="1.300"/></svg>
<div class="a" style="left:288px;top:141.8px;width:278.5px;height:16.2px;background:#4a4a4a;"></div>
<div class="t" style="left:289.8px;top:144.6px;font-size:9.0px;color:#f0f0f0;">Из линий</div>
<svg style="left:557.5px;top:149px" width="6" height="4"><path d="M0 0h5l-2.500 3z" fill="#d8d8d8"/></svg>
<svg style="left:572px;top:143px" width="86" height="15"><path d="M9 3.500v7.500M5.300 7.200h7.500" stroke="#5aa0f0" stroke-width="1.600"/><path d="M27 3l8.500 8.500M35.500 3l-8.500 8.500" stroke="#f2f2f2" stroke-width="1.500"/><path d="M51 7.200h8.500M54.500 3.700l-3.700 3.500l3.700 3.500" stroke="#5aa0f0" stroke-width="1.600" fill="none"/><path d="M73 7.200h8.500M78 3.700l3.700 3.500l-3.700 3.500" stroke="#dcdcdc" stroke-width="1.500" fill="none"/></svg>
<div class="a" style="left:288px;top:164.5px;width:355px;height:332px;background:#5d5d5d;border-top:1px solid #6a6a6a;border-bottom:1px solid #707070;overflow:hidden"></div>
<div class="a" style="left:643px;top:165px;width:14.7px;height:331px;background:#efefef;"></div>
<svg style="left:643px;top:165px" width="15" height="331"><path d="M4 9.500h7l-3.500-4z" fill="#a8a8a8"/><path d="M4 322h7l-3.500 4z" fill="#a8a8a8"/></svg>
<div class="a" style="left:0;top:0;width:643px;height:495.5px;overflow:hidden"><svg style="left:293.8px;top:170.7px" width="6" height="4"><path d="M0.800 0.600l2 2l2-2" stroke="#c4c4c4" stroke-width="1.100" fill="none"/></svg>
<svg style="left:306.8px;top:165.89999999999998px" width="12" height="13"><ellipse cx="6" cy="2.600" rx="5.400" ry="2.300" fill="#e9e9e9"/><path d="M0.600 4.200c0 3 10.800 3 10.800 0v2c0 3-10.800 3-10.800 0z" fill="#e9e9e9"/><path d="M0.600 7.800c0 3 10.800 3 10.800 0v2c0 3-10.800 3-10.800 0z" fill="#e9e9e9"/></svg>
<div class="t" style="left:324.4px;top:166.89999999999998px;font-size:9.65px;color:#c2c2c2;">Проект_2</div>
<svg style="left:310.05px;top:185.33999999999997px" width="6" height="4"><path d="M0.800 0.600l2 2l2-2" stroke="#c4c4c4" stroke-width="1.100" fill="none"/></svg>
<svg style="left:323.05px;top:180.53999999999996px" width="12" height="13"><rect x="0.500" y="0.500" width="11" height="9.500" rx="2" fill="#e9e9e9"/><circle cx="5.500" cy="4.800" r="2.300" fill="#5d5d5d"/><circle cx="6.200" cy="4.200" r="0.900" fill="#e9e9e9"/><path d="M4.500 10h3v2.500h-3z" fill="#e9e9e9"/></svg>
<div class="t" style="left:340.65px;top:181.53999999999996px;font-size:9.65px;color:#c2c2c2;">Устройства</div>
<svg style="left:339.3px;top:195.17999999999998px" width="12" height="13"><rect x="0.500" y="0.500" width="11" height="9.500" rx="2" fill="#e9e9e9"/><circle cx="5.500" cy="4.800" r="2.300" fill="#5d5d5d"/><circle cx="6.200" cy="4.200" r="0.900" fill="#e9e9e9"/><path d="M4.500 10h3v2.500h-3z" fill="#e9e9e9"/></svg>
<div class="t" style="left:356.9px;top:196.17999999999998px;font-size:9.15px;color:#c2c2c2;">Leica AT960</div>
<svg style="left:310.05px;top:214.62px" width="6" height="4"><path d="M0.800 0.600l2 2l2-2" stroke="#c4c4c4" stroke-width="1.100" fill="none"/></svg>
<svg style="left:322.55px;top:209.82px" width="13" height="13"><path d="M2.500 2v9M10.500 2v9M2.500 3.500h8" stroke="#e9e9e9" stroke-width="1" fill="none"/><rect x="0.800" y="0.500" width="3.400" height="3.400" fill="#e9e9e9"/><rect x="8.800" y="0.500" width="3.400" height="3.400" fill="#e9e9e9"/><rect x="0.800" y="9.200" width="3.400" height="3.400" fill="#e9e9e9"/><rect x="8.800" y="9.200" width="3.400" height="3.400" fill="#e9e9e9"/></svg>
<div class="t" style="left:340.65px;top:210.82px;font-size:9.65px;color:#c2c2c2;">Сессии</div>
<svg style="left:630.8px;top:211.02px" width="8" height="11"><path d="M3.600 0.600a3 3 0 0 1 1.900 5.400c-0.500 0.500-0.600 1-0.600 1.800v1.300h-2.600v-1.300c0-0.800-0.100-1.300-0.600-1.800a3 3 0 0 1 1.900-5.400z" fill="none" stroke="#e8e8e8" stroke-width="0.9"/><path d="M2.600 9.600h2" stroke="#e8e8e8" stroke-width="0.9"/></svg>
<div class="a" style="left:337px;top:223.26px;width:306px;height:14.7px;background:#4b6087;"></div>
<svg style="left:326.3px;top:229.26px" width="6" height="4"><path d="M0.800 0.600l2 2l2-2" stroke="#c4c4c4" stroke-width="1.100" fill="none"/></svg>
<svg style="left:338.8px;top:224.45999999999998px" width="13" height="13"><path d="M2.500 2v9M10.500 2v9M2.500 3.500h8" stroke="#e9e9e9" stroke-width="1" fill="none"/><rect x="0.800" y="0.500" width="3.400" height="3.400" fill="#e9e9e9"/><rect x="8.800" y="0.500" width="3.400" height="3.400" fill="#e9e9e9"/><rect x="0.800" y="9.200" width="3.400" height="3.400" fill="#e9e9e9"/><rect x="8.800" y="9.200" width="3.400" height="3.400" fill="#e9e9e9"/></svg>
<div class="t" style="left:356.9px;top:225.45999999999998px;font-size:9.65px;color:#f2f2f2;">Сессия_1</div>
<svg style="left:630.8px;top:225.66px" width="8" height="11"><path d="M3.600 0.600a3 3 0 0 1 1.900 5.400c-0.500 0.500-0.600 1-0.600 1.800v1.300h-2.600v-1.300c0-0.800-0.100-1.300-0.600-1.800a3 3 0 0 1 1.900-5.400z" fill="none" stroke="#e8e8e8" stroke-width="0.9"/><path d="M2.600 9.600h2" stroke="#e8e8e8" stroke-width="0.9"/></svg>
<svg style="left:359.55px;top:243.09999999999997px" width="4" height="4"><rect width="3.800" height="3.800" fill="#e9e9e9"/></svg>
<div class="t" style="left:373.15px;top:240.09999999999997px;font-size:9.65px;color:#c2c2c2;">Версия по умолчанию</div>
<svg style="left:326.3px;top:258.53999999999996px" width="6" height="4"><path d="M0.800 0.600l2 2l2-2" stroke="#c4c4c4" stroke-width="1.100" fill="none"/></svg>
<svg style="left:338.8px;top:253.73999999999995px" width="13" height="13"><path d="M2.500 2v9M10.500 2v9M2.500 3.500h8" stroke="#9a9a9a" stroke-width="1" fill="none"/><rect x="0.800" y="0.500" width="3.400" height="3.400" fill="#9a9a9a"/><rect x="8.800" y="0.500" width="3.400" height="3.400" fill="#9a9a9a"/><rect x="0.800" y="9.200" width="3.400" height="3.400" fill="#9a9a9a"/><rect x="8.800" y="9.200" width="3.400" height="3.400" fill="#9a9a9a"/></svg>
<div class="t" style="left:356.9px;top:254.73999999999995px;font-size:9.65px;color:#c2c2c2;">Сессия_2 *</div>
<svg style="left:630.8px;top:254.93999999999997px" width="8" height="11"><path d="M3.600 0.600a3 3 0 0 1 1.900 5.400c-0.500 0.500-0.600 1-0.600 1.800v1.300h-2.600v-1.300c0-0.800-0.100-1.300-0.600-1.800a3 3 0 0 1 1.900-5.400z" fill="none" stroke="#e8e8e8" stroke-width="0.9"/><path d="M2.600 9.600h2" stroke="#e8e8e8" stroke-width="0.9"/></svg>
<svg style="left:359.55px;top:272.38px" width="4" height="4"><rect width="3.800" height="3.800" fill="#e9e9e9"/></svg>
<div class="t" style="left:373.15px;top:269.38px;font-size:9.65px;color:#c2c2c2;">Версия по умолчанию</div>
<svg style="left:310.05px;top:287.82px" width="6" height="4"><path d="M0.800 0.600l2 2l2-2" stroke="#c4c4c4" stroke-width="1.100" fill="none"/></svg>
<svg style="left:323.55px;top:285.02px" width="11" height="9"><path d="M0.300 0.300h4l1 1.200h5.400v6.500h-10.400z" fill="#e9e9e9"/></svg>
<div class="t" style="left:340.65px;top:284.02px;font-size:9.65px;color:#c2c2c2;">Группы</div>
<svg style="left:630.8px;top:284.21999999999997px" width="8" height="11"><path d="M3.600 0.600a3 3 0 0 1 1.900 5.400c-0.500 0.500-0.600 1-0.600 1.800v1.300h-2.600v-1.300c0-0.800-0.100-1.300-0.600-1.800a3 3 0 0 1 1.900-5.400z" fill="none" stroke="#e8e8e8" stroke-width="0.9"/><path d="M2.600 9.600h2" stroke="#e8e8e8" stroke-width="0.9"/></svg>
<svg style="left:327.8px;top:301.46px" width="4" height="6"><path d="M0.600 0.800l2 2l-2 2" stroke="#c4c4c4" stroke-width="1.100" fill="none"/></svg>
<svg style="left:339.8px;top:299.65999999999997px" width="11" height="9"><path d="M0.300 0.300h4l1 1.200h5.400v6.500h-10.400z" fill="#e9e9e9"/></svg>
<div class="t" style="left:356.9px;top:298.65999999999997px;font-size:9.15px;color:#c2c2c2;">GR_2</div>
<svg style="left:630.8px;top:298.85999999999996px" width="8" height="11"><path d="M3.600 0.600a3 3 0 0 1 1.900 5.400c-0.500 0.500-0.600 1-0.600 1.800v1.300h-2.600v-1.300c0-0.800-0.100-1.300-0.600-1.800a3 3 0 0 1 1.900-5.400z" fill="none" stroke="#e8e8e8" stroke-width="0.9"/><path d="M2.600 9.600h2" stroke="#e8e8e8" stroke-width="0.9"/></svg>
<svg style="left:327.8px;top:316.1px" width="4" height="6"><path d="M0.600 0.800l2 2l-2 2" stroke="#c4c4c4" stroke-width="1.100" fill="none"/></svg>
<svg style="left:339.8px;top:314.3px" width="11" height="9"><path d="M0.300 0.300h4l1 1.200h5.400v6.500h-10.400z" fill="#e9e9e9"/></svg>
<div class="t" style="left:356.9px;top:313.3px;font-size:9.65px;color:#c2c2c2;">Контрольня группа</div>
<svg style="left:630.8px;top:313.5px" width="8" height="11"><path d="M3.600 0.600a3 3 0 0 1 1.900 5.400c-0.500 0.500-0.600 1-0.600 1.800v1.300h-2.600v-1.300c0-0.800-0.100-1.300-0.600-1.800a3 3 0 0 1 1.900-5.400z" fill="none" stroke="#e8e8e8" stroke-width="0.9"/><path d="M2.600 9.600h2" stroke="#e8e8e8" stroke-width="0.9"/></svg>
<svg style="left:310.05px;top:331.74px" width="6" height="4"><path d="M0.800 0.600l2 2l2-2" stroke="#c4c4c4" stroke-width="1.100" fill="none"/></svg>
<svg style="left:323.55px;top:327.94px" width="11" height="11"><path d="M1 0v10h10" stroke="#e9e9e9" stroke-width="1" fill="none"/></svg>
<div class="t" style="left:340.65px;top:327.94px;font-size:9.65px;color:#c2c2c2;">Системы координат</div>
<svg style="left:339.8px;top:342.58px" width="11" height="11"><path d="M1 0v10h10" stroke="#e9e9e9" stroke-width="1" fill="none"/></svg>
<div class="t" style="left:356.9px;top:342.58px;font-size:9.65px;color:#c2c2c2;">Система координат</div>
<svg style="left:310.05px;top:361.02px" width="6" height="4"><path d="M0.800 0.600l2 2l2-2" stroke="#c4c4c4" stroke-width="1.100" fill="none"/></svg>
<svg style="left:324.55px;top:357.21999999999997px" width="9" height="11"><path d="M0.500 2v7c0 2 8 2 8 0v-7z" fill="#d0d0d0"/><ellipse cx="4.500" cy="2" rx="4" ry="1.700" fill="#f0f0f0"/></svg>
<div class="t" style="left:340.65px;top:357.21999999999997px;font-size:9.65px;color:#c2c2c2;">Геометрия</div>
<svg style="left:630.8px;top:357.41999999999996px" width="8" height="11"><path d="M3.600 0.600a3 3 0 0 1 1.900 5.400c-0.500 0.500-0.600 1-0.600 1.800v1.300h-2.600v-1.300c0-0.800-0.100-1.300-0.600-1.800a3 3 0 0 1 1.900-5.400z" fill="none" stroke="#e8e8e8" stroke-width="0.9"/><path d="M2.600 9.600h2" stroke="#e8e8e8" stroke-width="0.9"/></svg>
<svg style="left:327.8px;top:374.65999999999997px" width="4" height="6"><path d="M0.600 0.800l2 2l-2 2" stroke="#c4c4c4" stroke-width="1.100" fill="none"/></svg>
<svg style="left:339.8px;top:372.85999999999996px" width="11" height="9"><path d="M0.300 0.300h4l1 1.200h5.400v6.500h-10.400z" fill="#e9e9e9"/></svg>
<div class="t" style="left:356.9px;top:371.85999999999996px;font-size:9.65px;color:#c2c2c2;">Точки</div>
<svg style="left:630.8px;top:372.05999999999995px" width="8" height="11"><path d="M3.600 0.600a3 3 0 0 1 1.900 5.400c-0.500 0.500-0.600 1-0.600 1.800v1.300h-2.600v-1.300c0-0.800-0.100-1.300-0.600-1.800a3 3 0 0 1 1.900-5.400z" fill="none" stroke="#e8e8e8" stroke-width="0.9"/><path d="M2.600 9.600h2" stroke="#e8e8e8" stroke-width="0.9"/></svg>
<svg style="left:340.8px;top:386.5px" width="9" height="11"><path d="M0.500 2v7c0 2 8 2 8 0v-7z" fill="#d0d0d0"/><ellipse cx="4.500" cy="2" rx="4" ry="1.700" fill="#f0f0f0"/></svg>
<div class="t" style="left:356.9px;top:386.5px;font-size:9.15px;color:#c2c2c2;">555</div>
<svg style="left:630.8px;top:386.7px" width="8" height="11"><path d="M3.600 0.600a3 3 0 0 1 1.900 5.400c-0.500 0.500-0.600 1-0.600 1.800v1.300h-2.600v-1.300c0-0.800-0.100-1.300-0.600-1.800a3 3 0 0 1 1.900-5.400z" fill="none" stroke="#e8e8e8" stroke-width="0.9"/><path d="M2.600 9.600h2" stroke="#e8e8e8" stroke-width="0.9"/></svg>
<svg style="left:340.8px;top:401.14px" width="9" height="11"><path d="M0.500 2v7c0 2 8 2 8 0v-7z" fill="#d0d0d0"/><ellipse cx="4.500" cy="2" rx="4" ry="1.700" fill="#f0f0f0"/></svg>
<div class="t" style="left:356.9px;top:401.14px;font-size:9.15px;color:#c2c2c2;">a1</div>
<svg style="left:630.8px;top:401.34px" width="8" height="11"><path d="M3.600 0.600a3 3 0 0 1 1.900 5.400c-0.500 0.500-0.600 1-0.600 1.800v1.300h-2.600v-1.300c0-0.800-0.100-1.300-0.600-1.800a3 3 0 0 1 1.900-5.400z" fill="none" stroke="#e8e8e8" stroke-width="0.9"/><path d="M2.600 9.600h2" stroke="#e8e8e8" stroke-width="0.9"/></svg>
<svg style="left:340.8px;top:415.78px" width="9" height="11"><path d="M0.500 2v7c0 2 8 2 8 0v-7z" fill="#d0d0d0"/><ellipse cx="4.500" cy="2" rx="4" ry="1.700" fill="#f0f0f0"/></svg>
<div class="t" style="left:356.9px;top:415.78px;font-size:9.15px;color:#c2c2c2;">line</div>
<svg style="left:630.8px;top:415.97999999999996px" width="8" height="11"><path d="M3.600 0.600a3 3 0 0 1 1.900 5.400c-0.500 0.500-0.600 1-0.600 1.800v1.300h-2.600v-1.300c0-0.800-0.100-1.300-0.600-1.800a3 3 0 0 1 1.900-5.400z" fill="none" stroke="#e8e8e8" stroke-width="0.9"/><path d="M2.600 9.600h2" stroke="#e8e8e8" stroke-width="0.9"/></svg>
<svg style="left:340.8px;top:430.41999999999996px" width="9" height="11"><path d="M0.500 2v7c0 2 8 2 8 0v-7z" fill="#d0d0d0"/><ellipse cx="4.500" cy="2" rx="4" ry="1.700" fill="#f0f0f0"/></svg>
<div class="t" style="left:356.9px;top:430.41999999999996px;font-size:9.15px;color:#c2c2c2;">qw</div>
<svg style="left:630.8px;top:430.61999999999995px" width="8" height="11"><path d="M3.600 0.600a3 3 0 0 1 1.900 5.400c-0.500 0.500-0.600 1-0.600 1.800v1.300h-2.600v-1.300c0-0.800-0.100-1.300-0.600-1.800a3 3 0 0 1 1.900-5.400z" fill="none" stroke="#e8e8e8" stroke-width="0.9"/><path d="M2.600 9.600h2" stroke="#e8e8e8" stroke-width="0.9"/></svg>
<svg style="left:340.8px;top:445.06px" width="9" height="11"><path d="M0.500 2v7c0 2 8 2 8 0v-7z" fill="#d0d0d0"/><ellipse cx="4.500" cy="2" rx="4" ry="1.700" fill="#f0f0f0"/></svg>
<div class="t" style="left:356.9px;top:445.06px;font-size:9.65px;color:#c2c2c2;">Деталь</div>
<svg style="left:630.8px;top:445.26px" width="8" height="11"><path d="M3.600 0.600a3 3 0 0 1 1.900 5.400c-0.500 0.500-0.600 1-0.600 1.800v1.300h-2.600v-1.300c0-0.800-0.100-1.300-0.600-1.800a3 3 0 0 1 1.900-5.400z" fill="none" stroke="#e8e8e8" stroke-width="0.9"/><path d="M2.600 9.600h2" stroke="#e8e8e8" stroke-width="0.9"/></svg>
<svg style="left:340.8px;top:459.7px" width="9" height="11"><path d="M0.500 2v7c0 2 8 2 8 0v-7z" fill="#d0d0d0"/><ellipse cx="4.500" cy="2" rx="4" ry="1.700" fill="#f0f0f0"/></svg>
<div class="t" style="left:356.9px;top:459.7px;font-size:9.65px;color:#c2c2c2;">Объект</div>
<svg style="left:630.8px;top:459.9px" width="8" height="11"><path d="M3.600 0.600a3 3 0 0 1 1.900 5.400c-0.500 0.500-0.600 1-0.600 1.800v1.300h-2.600v-1.300c0-0.800-0.100-1.300-0.600-1.800a3 3 0 0 1 1.900-5.400z" fill="none" stroke="#e8e8e8" stroke-width="0.9"/><path d="M2.600 9.600h2" stroke="#e8e8e8" stroke-width="0.9"/></svg>
<svg style="left:310.05px;top:478.14px" width="6" height="4"><path d="M0.800 0.600l2 2l2-2" stroke="#c4c4c4" stroke-width="1.100" fill="none"/></svg>
<svg style="left:322.55px;top:473.34px" width="13" height="13"><circle cx="6.500" cy="6.500" r="5.800" fill="none" stroke="#e9e9e9" stroke-width="1.100"/><path d="M6.500 0.700v11.600M1.500 3.600l10 5.800M11.500 3.600l-10 5.800" stroke="#e9e9e9" stroke-width="1"/></svg>
<div class="t" style="left:340.65px;top:474.34px;font-size:9.65px;color:#c2c2c2;">Марки</div>
<svg style="left:338.8px;top:487.98px" width="13" height="13"><circle cx="6.500" cy="6.500" r="5.800" fill="none" stroke="#e9e9e9" stroke-width="1.100"/><path d="M6.500 0.700v11.600M1.500 3.600l10 5.800M11.500 3.600l-10 5.800" stroke="#e9e9e9" stroke-width="1"/></svg>
<div class="t" style="left:356.9px;top:488.98px;font-size:9.65px;color:#c2c2c2;">Без марки</div></div>
<svg style="left:290px;top:504px" width="40" height="14"><path d="M2 7h10M5.500 3.500l-3.700 3.500l3.700 3.500" stroke="#e6e6e6" stroke-width="1.500" fill="none"/><path d="M20.500 1.500h9l2 2v9h-11z" fill="#9a9a9a"/><rect x="22.500" y="1.500" width="6.500" height="3.800" fill="#c9c9c9"/><rect x="22.500" y="7.500" width="7" height="5" fill="#d0d0d0"/></svg>
<svg style="left:646px;top:510px" width="6" height="4"><path d="M0 0h4.600l-2.300 2.600z" fill="#cfcfcf"/></svg>
<div class="t" style="left:293.5px;top:528.3px;font-size:8.85px;color:#e8e8e8;">Имя:</div>
<div class="a" style="left:356px;top:525.0px;width:295.5px;height:16.5px;background:#4a4a4a;border:1px solid #626262"></div>
<div class="t" style="left:358.2px;top:528.3px;font-size:8.9px;color:#eaeaea;">Сессия_1</div>
<div class="t" style="left:293.5px;top:551.0799999999999px;font-size:8.85px;color:#e8e8e8;">Пояснение:</div>
<div class="a" style="left:356px;top:547.78px;width:295.5px;height:16.5px;background:#4a4a4a;border:1px solid #626262"></div>
<div class="t" style="left:358.2px;top:551.0799999999999px;font-size:8.9px;color:#eaeaea;"></div>
<div class="t" style="left:293.5px;top:573.8599999999999px;font-size:8.85px;color:#e8e8e8;">Устройство:</div>
<div class="a" style="left:356px;top:570.56px;width:256.5px;height:16.5px;background:#5a5a5a;border:1px solid #6c6c6c"></div>
<div class="t" style="left:358px;top:573.8599999999999px;font-size:8.9px;color:#a8a8a8;">Leica AT960</div>
<svg style="left:617px;top:572.56px" width="36" height="13"><path d="M2 2l8.400 8.400M10.400 2l-8.400 8.400" stroke="#f2f2f2" stroke-width="1.500"/><rect x="22" y="8.800" width="1.600" height="1.600" fill="#eee"/><rect x="25.400" y="8.800" width="1.600" height="1.600" fill="#eee"/><rect x="28.800" y="8.800" width="1.600" height="1.600" fill="#eee"/></svg>
<div class="t" style="left:293.5px;top:596.64px;font-size:8.85px;color:#e8e8e8;">Температура:</div>
<div class="a" style="left:356px;top:593.34px;width:295.5px;height:16.5px;background:#4a4a4a;border:1px solid #626262"></div>
<div class="t" style="left:358.2px;top:596.64px;font-size:8.9px;color:#eaeaea;">24</div>
<div class="t" style="left:293.5px;top:619.42px;font-size:8.85px;color:#e8e8e8;">Влажность:</div>
<div class="a" style="left:356px;top:616.12px;width:295.5px;height:16.5px;background:#4a4a4a;border:1px solid #626262"></div>
<div class="t" style="left:358.2px;top:619.42px;font-size:8.9px;color:#eaeaea;">60</div>
<div class="t" style="left:293.5px;top:642.1999999999999px;font-size:8.85px;color:#e8e8e8;">Давление :</div>
<div class="a" style="left:356px;top:638.9px;width:295.5px;height:16.5px;background:#4a4a4a;border:1px solid #626262"></div>
<div class="t" style="left:358.2px;top:642.1999999999999px;font-size:8.9px;color:#eaeaea;">745</div>
<div class="t" style="left:293.5px;top:664.98px;font-size:8.85px;color:#e8e8e8;">Созданный в:</div>
<div class="a" style="left:356px;top:661.6800000000001px;width:295.5px;height:16.5px;background:#5d5d5d;border:1px solid #6e6e6e"></div>
<div class="a" style="left:638.5px;top:662.1800000000001px;width:12.5px;height:16px;background:#616161;border-right:1.2px solid #303030;border-bottom:2px solid #303030;border-left:1px solid #6c6c6c"></div>
<svg style="left:642.5px;top:668.1800000000001px" width="5" height="3"><path d="M0 0h4l-2 2z" fill="#777"/></svg>
<div class="t" style="left:358.2px;top:664.98px;font-size:9.05px;color:#eaeaea;">30.08.2024</div>
<div class="t" style="left:293.5px;top:687.76px;font-size:8.85px;color:#e8e8e8;">Обновлено в:</div>
<div class="a" style="left:356px;top:684.46px;width:295.5px;height:16.5px;background:#5d5d5d;border:1px solid #6e6e6e"></div>
<div class="a" style="left:638.5px;top:684.96px;width:12.5px;height:16px;background:#616161;border-right:1.2px solid #303030;border-bottom:2px solid #303030;border-left:1px solid #6c6c6c"></div>
<svg style="left:642.5px;top:690.96px" width="5" height="3"><path d="M0 0h4l-2 2z" fill="#777"/></svg>
<div class="t" style="left:358.2px;top:687.76px;font-size:9.05px;color:#eaeaea;">30.08.2024</div>
<!-- p4_view -->
<div class="a" style="left:662px;top:125.5px;width:898px;height:16px;background:#4d4d4d;"></div>
<div class="a" style="left:663px;top:127px;width:77px;height:14px;background:#7e7e7e;"></div>
<div class="a" style="left:740px;top:127px;width:23.7px;height:14px;background:#494949;border:1px solid #6a6a6a;border-left:none;border-bottom:none"></div>
<div class="a" style="left:662px;top:140.6px;width:898px;height:1.3px;background:#7c7c7c;"></div>
<div class="t" style="left:679px;top:128.3px;font-size:9.2px;color:#f4f4f4;">test1.prj*</div>
<svg style="left:729px;top:130px" width="8" height="8"><path d="M0.800 0.800l5.800 5.800M6.600 0.800l-5.800 5.800" stroke="#f0f0f0" stroke-width="1.100"/></svg>
<div class="t" style="left:745.5px;top:128.3px;font-size:9.2px;color:#d0d0d0;">1*</div>
<svg style="left:1545px;top:131px" width="9" height="5"><path d="M0 0h8l-4 4.500z" fill="#f0f0f0"/></svg>
<div class="a" style="left:664.5px;top:142.3px;width:894.0999999999999px;height:546px;background:#2a2a2a;"></div>
<div class="a" style="left:663px;top:688.3px;width:897px;height:1.2px;background:#8c8c8c;"></div>
<div class="a" style="left:663px;top:689.5px;width:897px;height:16.5px;background:#4b4b4b;"></div>
<div class="a" style="left:662px;top:705.9px;width:898px;height:1.5px;background:#828282;"></div>
<div class="a" style="left:662px;top:707.4px;width:898px;height:5.6px;background:#4a4a4a;"></div>
<svg style="left:665.800px;top:691.200px" width="14" height="12"><rect x="0.500" y="0.500" width="12.500" height="10.800" fill="#3c3c3c" stroke="#e0e0e0" stroke-width="0.9"/><rect x="1.200" y="2.800" width="11" height="2.600" fill="#5a8fd8"/><path d="M1 7.800h12" stroke="#e0e0e0" stroke-width="0.900"/></svg>
<div class="a" style="left:693px;top:689.6px;width:47px;height:14.2px;background:#838383;"></div>
<div class="t" style="left:686.3px;top:691px;width:60px;text-align:center;font-size:9.2px;color:#ffffff;">Модель</div>
<div class="a" style="left:740px;top:689.6px;width:21.5px;height:14.2px;background:#4a4a4a;border:1px solid #6e6e6e;border-left:none;border-top-color:#5c5c5c"></div>
<div class="t" style="left:730.75px;top:691.2px;width:40px;text-align:center;font-size:9px;color:#b4b4b4;">A4</div>
<div class="a" style="left:761.5px;top:689.6px;width:21.799999999999955px;height:14.2px;background:#4a4a4a;border:1px solid #6e6e6e;border-left:none;border-top-color:#5c5c5c"></div>
<div class="t" style="left:752.4px;top:691.2px;width:40px;text-align:center;font-size:9px;color:#b4b4b4;">A3</div>
<div class="a" style="left:783.3px;top:689.6px;width:22.40000000000009px;height:14.2px;background:#4a4a4a;border:1px solid #6e6e6e;border-left:none;border-top-color:#5c5c5c"></div>
<div class="t" style="left:774.5px;top:691.2px;width:40px;text-align:center;font-size:9px;color:#b4b4b4;">A2</div>
<div class="a" style="left:805.7px;top:689.6px;width:21.299999999999955px;height:14.2px;background:#4a4a4a;border:1px solid #6e6e6e;border-left:none;border-top-color:#5c5c5c"></div>
<div class="t" style="left:796.35px;top:691.2px;width:40px;text-align:center;font-size:9px;color:#b4b4b4;">A1</div>
<div class="a" style="left:662px;top:141px;width:1.9px;height:566.5px;background:#787878;"></div>
<!-- p5_model -->
<svg style="left:664.5px;top:142.3px" width="893" height="546" viewBox="664.5 142.3 893 546">
<defs>
<clipPath id="vp"><rect x="664.5" y="142.3" width="893" height="546"/></clipPath>
<clipPath id="mc"><path d="M883.6 205.4C890.8 201.5 901.6 211.4 911.0 214.5C920.4 217.6 932.7 221.5 940.0 224.0C947.3 226.5 950.6 227.9 955.0 229.5C959.4 231.1 962.5 234.5 966.3 233.6C970.1 232.7 973.4 227.6 978.0 224.0C982.6 220.4 989.9 215.1 993.8 211.8C997.7 208.5 999.1 207.0 1001.5 204.0C1003.9 201.0 1004.9 197.0 1008.0 194.0C1011.1 191.0 1015.0 188.0 1020.0 186.0C1025.0 184.0 1032.3 182.2 1038.0 181.9C1043.7 181.7 1049.3 183.2 1054.0 184.5C1058.7 185.8 1060.8 189.7 1066.0 190.0C1071.2 190.3 1078.8 187.3 1085.0 186.5C1091.2 185.7 1094.3 185.0 1103.0 185.4C1111.7 185.8 1126.2 187.4 1137.0 189.2C1147.8 191.0 1159.8 194.0 1167.8 196.0C1175.8 198.0 1180.1 199.6 1185.0 201.0C1189.9 202.4 1193.5 204.2 1197.0 204.5C1200.5 204.8 1203.2 204.1 1206.0 203.0C1208.8 201.9 1211.2 199.6 1214.0 197.7C1216.8 195.8 1219.4 193.4 1223.0 191.5C1226.6 189.6 1229.7 186.7 1235.5 186.2C1241.3 185.7 1251.3 186.8 1258.0 188.5C1264.7 190.2 1271.5 193.6 1275.5 196.2C1279.5 198.8 1280.3 199.9 1282.0 204.0C1283.7 208.1 1284.0 216.2 1285.5 220.8C1287.0 225.4 1288.6 227.1 1291.0 231.6C1293.4 236.1 1294.5 237.2 1300.0 248.0C1305.5 258.8 1316.0 280.0 1324.0 296.5C1332.0 313.0 1340.0 329.8 1348.0 347.0C1356.0 364.2 1366.5 388.7 1372.0 400.0C1377.5 411.3 1378.7 410.0 1381.0 415.0C1383.3 420.0 1385.2 425.3 1386.0 430.0C1386.8 434.7 1386.8 439.0 1386.0 443.0C1385.2 447.0 1383.3 450.5 1381.0 454.0C1378.7 457.5 1375.2 461.0 1372.0 464.0C1368.8 467.0 1364.7 469.3 1362.0 472.0C1359.3 474.7 1357.5 477.2 1356.0 480.0C1354.5 482.8 1353.9 485.2 1352.7 489.0C1351.5 492.8 1351.0 497.7 1349.0 503.0C1347.0 508.3 1344.5 515.8 1341.0 521.0C1337.5 526.2 1332.2 531.2 1328.0 534.0C1323.8 536.8 1320.6 537.8 1315.5 538.0C1310.4 538.2 1303.5 535.5 1297.6 535.5C1291.7 535.5 1285.1 536.1 1280.0 538.0C1274.9 539.9 1271.1 543.2 1266.8 546.8C1262.5 550.4 1260.5 553.6 1254.0 559.6C1247.5 565.6 1236.6 575.9 1228.0 582.7C1219.4 589.5 1210.8 595.6 1202.6 600.6C1194.4 605.6 1185.3 609.8 1179.0 613.0C1172.7 616.2 1168.2 617.2 1165.0 620.0C1161.8 622.8 1159.8 625.8 1160.0 630.0C1160.2 634.2 1165.7 639.7 1166.5 645.0C1167.3 650.3 1167.1 656.5 1165.0 662.0C1162.9 667.5 1159.3 674.0 1154.0 678.0C1148.7 682.0 1140.0 685.8 1133.0 686.0C1126.0 686.2 1117.5 682.5 1112.0 679.0C1106.5 675.5 1102.8 670.2 1100.0 665.0C1097.2 659.8 1095.3 652.8 1095.0 648.0C1094.7 643.2 1098.8 638.7 1098.0 636.0C1097.2 633.3 1095.7 632.8 1090.0 632.0C1084.3 631.2 1075.7 631.7 1064.0 631.0C1052.3 630.3 1033.3 630.5 1020.0 627.8C1006.7 625.1 994.5 619.6 984.0 615.0C973.5 610.4 966.1 605.9 957.0 600.4C947.9 594.9 938.7 588.7 929.5 582.0C920.3 575.3 910.2 566.3 902.0 560.0C893.8 553.7 886.1 549.1 880.0 544.0C873.9 538.9 869.4 534.1 865.6 529.3C861.8 524.5 859.6 523.2 857.0 515.0C854.4 506.8 851.8 495.8 850.0 480.0C848.2 464.2 846.3 443.3 846.0 420.0C845.7 396.7 846.2 364.9 848.0 340.0C849.8 315.1 853.4 287.8 856.7 270.8C860.0 253.8 863.5 248.9 868.0 238.0C872.5 227.1 876.4 209.3 883.6 205.4Z"/></clipPath>
<clipPath id="hc"><path d="M1103 322.600C1085 326 1074 345 1073.400 372C1074 400 1092 425 1136 427.300C1150 418 1160 398 1160.600 375C1159 345 1135 324 1103 322.600Z"/><ellipse cx="1032.500" cy="220.700" rx="10" ry="14" transform="rotate(-14 1032.500 220.700)"/><ellipse cx="1247.500" cy="221.200" rx="13.500" ry="15.800" transform="rotate(-12 1247.500 221.200)"/><circle cx="1350" cy="438.500" r="15.800"/><ellipse cx="1131" cy="650" rx="15" ry="16.500"/></clipPath>
<linearGradient id="gBody" gradientUnits="userSpaceOnUse" x1="900" y1="200" x2="1350" y2="650"><stop offset="0" stop-color="#d6d6d6"/><stop offset="0.45" stop-color="#dcdcdc"/><stop offset="1" stop-color="#d3d3d3"/></linearGradient>
<linearGradient id="gPipe" gradientUnits="userSpaceOnUse" x1="935" y1="222" x2="905" y2="390"><stop offset="0" stop-color="#c2c2c2"/><stop offset="0.10" stop-color="#d6d6d6"/><stop offset="0.35" stop-color="#dedede"/><stop offset="0.7" stop-color="#d3d3d3"/><stop offset="1" stop-color="#bdbdbd"/></linearGradient>
<linearGradient id="gTube" gradientUnits="userSpaceOnUse" x1="1043" y1="452" x2="1114" y2="488"><stop offset="0" stop-color="#b4b4b4"/><stop offset="0.25" stop-color="#dedede"/><stop offset="0.65" stop-color="#d6d6d6"/><stop offset="1" stop-color="#ababab"/></linearGradient>
<radialGradient id="gLug" cx="0.5" cy="0.5" r="0.5"><stop offset="0.46" stop-color="#9a9a9a"/><stop offset="0.60" stop-color="#c6c6c6"/><stop offset="0.78" stop-color="#e4e4e4"/><stop offset="0.93" stop-color="#dadada"/><stop offset="1" stop-color="#d0d0d0"/></radialGradient>
<linearGradient id="gWall" gradientUnits="userSpaceOnUse" x1="1110" y1="318" x2="1180" y2="420"><stop offset="0" stop-color="#a6a6a6"/><stop offset="0.3" stop-color="#cdcdcd"/><stop offset="0.7" stop-color="#e2e2e2"/><stop offset="1" stop-color="#d2d2d2"/></linearGradient>
<filter id="b2"><feGaussianBlur stdDeviation="2"/></filter><filter id="b4"><feGaussianBlur stdDeviation="4"/></filter><filter id="b1"><feGaussianBlur stdDeviation="0.7"/></filter><filter id="b8"><feGaussianBlur stdDeviation="7"/></filter>
</defs>
<g clip-path="url(#vp)">
<path d="M665.5 142.3V688.3M694.7 142.3V688.3M723.9 142.3V688.3M753.1 142.3V688.3M782.3 142.3V688.3M811.5 142.3V688.3M840.7 142.3V688.3M869.9 142.3V688.3M899.1 142.3V688.3M928.3 142.3V688.3M957.5 142.3V688.3M986.7 142.3V688.3M1015.9 142.3V688.3M1045.1 142.3V688.3M1074.3 142.3V688.3M1103.5 142.3V688.3M1132.7 142.3V688.3M1161.9 142.3V688.3M1191.1 142.3V688.3M1220.3 142.3V688.3M1249.5 142.3V688.3M1278.7 142.3V688.3M1307.9 142.3V688.3M1337.1 142.3V688.3M1366.3 142.3V688.3M1395.5 142.3V688.3M1424.7 142.3V688.3M1453.9 142.3V688.3M1483.1 142.3V688.3M1512.3 142.3V688.3M1541.5 142.3V688.3M664.5 146.6H1557.5M664.5 175.8H1557.5M664.5 205.0H1557.5M664.5 234.2H1557.5M664.5 263.4H1557.5M664.5 292.6H1557.5M664.5 321.8H1557.5M664.5 351.0H1557.5M664.5 380.2H1557.5M664.5 409.4H1557.5M664.5 438.6H1557.5M664.5 467.8H1557.5M664.5 497.0H1557.5M664.5 526.2H1557.5M664.5 555.4H1557.5M664.5 584.6H1557.5M664.5 613.8H1557.5M664.5 643.0H1557.5M664.5 672.2H1557.5" stroke="#303035" stroke-width="1" fill="none"/>
<path d="M664.5 205H1103.500" stroke="#602a33" stroke-width="1"/><path d="M1103.500 142.3V205" stroke="#2a6236" stroke-width="1"/>
<path d="M883.6 205.4C890.8 201.5 901.6 211.4 911.0 214.5C920.4 217.6 932.7 221.5 940.0 224.0C947.3 226.5 950.6 227.9 955.0 229.5C959.4 231.1 962.5 234.5 966.3 233.6C970.1 232.7 973.4 227.6 978.0 224.0C982.6 220.4 989.9 215.1 993.8 211.8C997.7 208.5 999.1 207.0 1001.5 204.0C1003.9 201.0 1004.9 197.0 1008.0 194.0C1011.1 191.0 1015.0 188.0 1020.0 186.0C1025.0 184.0 1032.3 182.2 1038.0 181.9C1043.7 181.7 1049.3 183.2 1054.0 184.5C1058.7 185.8 1060.8 189.7 1066.0 190.0C1071.2 190.3 1078.8 187.3 1085.0 186.5C1091.2 185.7 1094.3 185.0 1103.0 185.4C1111.7 185.8 1126.2 187.4 1137.0 189.2C1147.8 191.0 1159.8 194.0 1167.8 196.0C1175.8 198.0 1180.1 199.6 1185.0 201.0C1189.9 202.4 1193.5 204.2 1197.0 204.5C1200.5 204.8 1203.2 204.1 1206.0 203.0C1208.8 201.9 1211.2 199.6 1214.0 197.7C1216.8 195.8 1219.4 193.4 1223.0 191.5C1226.6 189.6 1229.7 186.7 1235.5 186.2C1241.3 185.7 1251.3 186.8 1258.0 188.5C1264.7 190.2 1271.5 193.6 1275.5 196.2C1279.5 198.8 1280.3 199.9 1282.0 204.0C1283.7 208.1 1284.0 216.2 1285.5 220.8C1287.0 225.4 1288.6 227.1 1291.0 231.6C1293.4 236.1 1294.5 237.2 1300.0 248.0C1305.5 258.8 1316.0 280.0 1324.0 296.5C1332.0 313.0 1340.0 329.8 1348.0 347.0C1356.0 364.2 1366.5 388.7 1372.0 400.0C1377.5 411.3 1378.7 410.0 1381.0 415.0C1383.3 420.0 1385.2 425.3 1386.0 430.0C1386.8 434.7 1386.8 439.0 1386.0 443.0C1385.2 447.0 1383.3 450.5 1381.0 454.0C1378.7 457.5 1375.2 461.0 1372.0 464.0C1368.8 467.0 1364.7 469.3 1362.0 472.0C1359.3 474.7 1357.5 477.2 1356.0 480.0C1354.5 482.8 1353.9 485.2 1352.7 489.0C1351.5 492.8 1351.0 497.7 1349.0 503.0C1347.0 508.3 1344.5 515.8 1341.0 521.0C1337.5 526.2 1332.2 531.2 1328.0 534.0C1323.8 536.8 1320.6 537.8 1315.5 538.0C1310.4 538.2 1303.5 535.5 1297.6 535.5C1291.7 535.5 1285.1 536.1 1280.0 538.0C1274.9 539.9 1271.1 543.2 1266.8 546.8C1262.5 550.4 1260.5 553.6 1254.0 559.6C1247.5 565.6 1236.6 575.9 1228.0 582.7C1219.4 589.5 1210.8 595.6 1202.6 600.6C1194.4 605.6 1185.3 609.8 1179.0 613.0C1172.7 616.2 1168.2 617.2 1165.0 620.0C1161.8 622.8 1159.8 625.8 1160.0 630.0C1160.2 634.2 1165.7 639.7 1166.5 645.0C1167.3 650.3 1167.1 656.5 1165.0 662.0C1162.9 667.5 1159.3 674.0 1154.0 678.0C1148.7 682.0 1140.0 685.8 1133.0 686.0C1126.0 686.2 1117.5 682.5 1112.0 679.0C1106.5 675.5 1102.8 670.2 1100.0 665.0C1097.2 659.8 1095.3 652.8 1095.0 648.0C1094.7 643.2 1098.8 638.7 1098.0 636.0C1097.2 633.3 1095.7 632.8 1090.0 632.0C1084.3 631.2 1075.7 631.7 1064.0 631.0C1052.3 630.3 1033.3 630.5 1020.0 627.8C1006.7 625.1 994.5 619.6 984.0 615.0C973.5 610.4 966.1 605.9 957.0 600.4C947.9 594.9 938.7 588.7 929.5 582.0C920.3 575.3 910.2 566.3 902.0 560.0C893.8 553.7 886.1 549.1 880.0 544.0C873.9 538.9 869.4 534.1 865.6 529.3C861.8 524.5 859.6 523.2 857.0 515.0C854.4 506.8 851.8 495.8 850.0 480.0C848.2 464.2 846.3 443.3 846.0 420.0C845.7 396.7 846.2 364.9 848.0 340.0C849.8 315.1 853.4 287.8 856.7 270.8C860.0 253.8 863.5 248.9 868.0 238.0C872.5 227.1 876.4 209.3 883.6 205.4Z" fill="url(#gBody)"/>
<g clip-path="url(#mc)">
<path d="M883.6 205.4C890.8 201.5 901.6 211.4 911.0 214.5C920.4 217.6 932.7 221.5 940.0 224.0C947.3 226.5 950.6 227.9 955.0 229.5C959.4 231.1 962.5 234.5 966.3 233.6C970.1 232.7 973.4 227.6 978.0 224.0C982.6 220.4 989.9 215.1 993.8 211.8C997.7 208.5 999.1 207.0 1001.5 204.0C1003.9 201.0 1004.9 197.0 1008.0 194.0C1011.1 191.0 1015.0 188.0 1020.0 186.0C1025.0 184.0 1032.3 182.2 1038.0 181.9C1043.7 181.7 1049.3 183.2 1054.0 184.5C1058.7 185.8 1060.8 189.7 1066.0 190.0C1071.2 190.3 1078.8 187.3 1085.0 186.5C1091.2 185.7 1094.3 185.0 1103.0 185.4C1111.7 185.8 1126.2 187.4 1137.0 189.2C1147.8 191.0 1159.8 194.0 1167.8 196.0C1175.8 198.0 1180.1 199.6 1185.0 201.0C1189.9 202.4 1193.5 204.2 1197.0 204.5C1200.5 204.8 1203.2 204.1 1206.0 203.0C1208.8 201.9 1211.2 199.6 1214.0 197.7C1216.8 195.8 1219.4 193.4 1223.0 191.5C1226.6 189.6 1229.7 186.7 1235.5 186.2C1241.3 185.7 1251.3 186.8 1258.0 188.5C1264.7 190.2 1271.5 193.6 1275.5 196.2C1279.5 198.8 1280.3 199.9 1282.0 204.0C1283.7 208.1 1284.0 216.2 1285.5 220.8C1287.0 225.4 1288.6 227.1 1291.0 231.6C1293.4 236.1 1294.5 237.2 1300.0 248.0C1305.5 258.8 1316.0 280.0 1324.0 296.5C1332.0 313.0 1340.0 329.8 1348.0 347.0C1356.0 364.2 1366.5 388.7 1372.0 400.0C1377.5 411.3 1378.7 410.0 1381.0 415.0C1383.3 420.0 1385.2 425.3 1386.0 430.0C1386.8 434.7 1386.8 439.0 1386.0 443.0C1385.2 447.0 1383.3 450.5 1381.0 454.0C1378.7 457.5 1375.2 461.0 1372.0 464.0C1368.8 467.0 1364.7 469.3 1362.0 472.0C1359.3 474.7 1357.5 477.2 1356.0 480.0C1354.5 482.8 1353.9 485.2 1352.7 489.0C1351.5 492.8 1351.0 497.7 1349.0 503.0C1347.0 508.3 1344.5 515.8 1341.0 521.0C1337.5 526.2 1332.2 531.2 1328.0 534.0C1323.8 536.8 1320.6 537.8 1315.5 538.0C1310.4 538.2 1303.5 535.5 1297.6 535.5C1291.7 535.5 1285.1 536.1 1280.0 538.0C1274.9 539.9 1271.1 543.2 1266.8 546.8C1262.5 550.4 1260.5 553.6 1254.0 559.6C1247.5 565.6 1236.6 575.9 1228.0 582.7C1219.4 589.5 1210.8 595.6 1202.6 600.6C1194.4 605.6 1185.3 609.8 1179.0 613.0C1172.7 616.2 1168.2 617.2 1165.0 620.0C1161.8 622.8 1159.8 625.8 1160.0 630.0C1160.2 634.2 1165.7 639.7 1166.5 645.0C1167.3 650.3 1167.1 656.5 1165.0 662.0C1162.9 667.5 1159.3 674.0 1154.0 678.0C1148.7 682.0 1140.0 685.8 1133.0 686.0C1126.0 686.2 1117.5 682.5 1112.0 679.0C1106.5 675.5 1102.8 670.2 1100.0 665.0C1097.2 659.8 1095.3 652.8 1095.0 648.0C1094.7 643.2 1098.8 638.7 1098.0 636.0C1097.2 633.3 1095.7 632.8 1090.0 632.0C1084.3 631.2 1075.7 631.7 1064.0 631.0C1052.3 630.3 1033.3 630.5 1020.0 627.8C1006.7 625.1 994.5 619.6 984.0 615.0C973.5 610.4 966.1 605.9 957.0 600.4C947.9 594.9 938.7 588.7 929.5 582.0C920.3 575.3 910.2 566.3 902.0 560.0C893.8 553.7 886.1 549.1 880.0 544.0C873.9 538.9 869.4 534.1 865.6 529.3C861.8 524.5 859.6 523.2 857.0 515.0C854.4 506.8 851.8 495.8 850.0 480.0C848.2 464.2 846.3 443.3 846.0 420.0C845.7 396.7 846.2 364.9 848.0 340.0C849.8 315.1 853.4 287.8 856.7 270.8C860.0 253.8 863.5 248.9 868.0 238.0C872.5 227.1 876.4 209.3 883.6 205.4Z" fill="none" stroke="#c9c9c9" stroke-width="3" filter="url(#b1)"/>
<circle cx="1140" cy="392" r="170" fill="none" stroke="#c4c4c4" stroke-width="6" filter="url(#b2)"/>
<circle cx="1140" cy="392" r="178" fill="none" stroke="#e4e4e4" stroke-width="4" filter="url(#b2)"/>
<circle cx="1140" cy="396" r="206" fill="none" stroke="#e6e6e6" stroke-width="5" filter="url(#b2)"/>
<circle cx="1140" cy="396" r="213" fill="none" stroke="#bdbdbd" stroke-width="3" filter="url(#b2)"/>
<path d="M883.600 205.400L940 224L966.300 233.600L1010 250L1075 300L1050 400L1005 372L912 354L846 345L848 300L868 238Z" fill="url(#gPipe)"/>
<path d="M912 356L1005 374L1040 398L1040 440L912 400Z" fill="#b4b4b4" opacity="0.8" filter="url(#b4)"/>
<path d="M940 224C934 250 928 280 922 315" stroke="#a4a4a4" stroke-width="1.400" fill="none"/><path d="M942.500 226C937 250 931 280 925 315" stroke="#e6e6e6" stroke-width="1.200" fill="none"/>
<path d="M884 206C872 225 862 250 857 275" stroke="#e4e4e4" stroke-width="9" fill="none"/><path d="M879 219C873 235 869 255 867 272" stroke="#adadad" stroke-width="4.500" fill="none" filter="url(#b1)"/>
<path d="M966 236L1003 207L1010 214L975 243Z" fill="#e4e4e4"/><path d="M975 243L1010 214L1014 219L982 247Z" fill="#bcbcbc" filter="url(#b1)"/>
<path d="M866.0 520.0C869.7 523.8 880.7 536.4 888.0 543.0C895.3 549.6 901.8 553.7 910.0 559.5C918.2 565.3 927.8 572.2 937.0 578.0C946.2 583.8 955.8 589.2 965.0 594.0C974.2 598.8 981.5 602.8 992.0 607.0C1002.5 611.2 1015.0 616.3 1028.0 619.0C1041.0 621.7 1058.8 622.2 1070.0 623.0C1081.2 623.8 1090.8 623.8 1095.0 624.0" stroke="#8c8c8c" stroke-width="2.200" fill="none" filter="url(#b1)"/>
<path d="M872.0 517.0C875.5 520.5 885.8 531.8 893.0 538.0C900.2 544.2 906.8 548.3 915.0 554.0C923.2 559.7 932.8 566.3 942.0 572.0C951.2 577.7 960.8 583.2 970.0 588.0C979.2 592.8 987.0 597.0 997.0 601.0C1007.0 605.0 1017.8 609.5 1030.0 612.0C1042.2 614.5 1058.3 615.2 1070.0 616.0C1081.7 616.8 1095.0 616.8 1100.0 617.0" stroke="#c2c2c2" stroke-width="5" fill="none" filter="url(#b2)"/>
<path d="M1005 505L905 590L1000 640L1080 525Z" fill="#c4c4c4" opacity="0.6" filter="url(#b4)"/>
<path d="M1160 510L1195 600L1240 575L1190 500Z" fill="#c4c4c4" opacity="0.55" filter="url(#b4)"/>
<path d="M1110 540L1100 610L1160 605L1140 535Z" fill="#e2e2e2" opacity="0.6" filter="url(#b4)"/>
<path d="M1040 330C1030 380 1040 440 1085 470L1120 450L1060 330Z" fill="#b4b4b4" opacity="0.85" filter="url(#b4)"/>
<path d="M1197 214.600C1205 226 1216 244 1229 253C1240 261 1256 262 1265 250C1274 240 1281 232 1284 226" stroke="#c6c6c6" stroke-width="2.500" fill="none" filter="url(#b1)"/>
<path d="M1364 388C1340 392 1318 405 1309 428C1303 452 1312 470 1330 478C1340 482 1350 482 1356 481" stroke="#b8b8b8" stroke-width="2.500" fill="none" filter="url(#b1)"/>
<path d="M1078.500 190L1086 186.500L1169 272L1162 279Z" fill="#e6e6e6"/>
<path d="M1088 203L1128 250L1143 264L1158 272L1160 268L1132 238Z" fill="#9c9c9c" filter="url(#b1)"/>
<path d="M1132 193L1139 191L1198 284L1192 287Z" fill="#cdcdcd" filter="url(#b1)"/><path d="M1139 191L1198 284" stroke="#ededed" stroke-width="1.200"/>
<path d="M1068 243C1090 226 1115 220 1140 222" stroke="#c4c4c4" stroke-width="2.500" fill="none" filter="url(#b1)"/>
<path d="M1220 428L1225.500 422.500L1347 503.500L1341 511Z" fill="#b4b4b4" filter="url(#b1)"/><path d="M1225.500 422.500L1347 503.500" stroke="#e2e2e2" stroke-width="1"/>
<path d="M934 414L1046 392L1049 403L937 426Z" fill="#e0e0e0" stroke="#bababa" stroke-width="0.8"/>
<path d="M937 427L1049 404L1050 410L940 432Z" fill="#b0b0b0" filter="url(#b1)"/>
<path d="M1001 489L1040 490L1040 497L1001 497Z" fill="#e2e2e2" stroke="#bababa" stroke-width="0.8"/><path d="M1003 498.500L1040 498.500" stroke="#ababab" stroke-width="1.500" filter="url(#b1)"/>
<ellipse cx="1133" cy="366" rx="98.500" ry="97" fill="none" stroke="#bebebe" stroke-width="3" filter="url(#b1)"/>
<path d="M1059 428L1034.500 483C1045 508 1085 522 1100.500 515L1131 458Z" fill="url(#gTube)"/>
<ellipse cx="1067" cy="501" rx="35" ry="10.500" transform="rotate(28 1067 501)" fill="#d2d2d2" stroke="#a4a4a4" stroke-width="1.300"/>
<ellipse cx="1067.500" cy="503" rx="28" ry="6.500" transform="rotate(28 1067.500 503)" fill="#efefef" stroke="#b0b0b0" stroke-width="0.800"/>
<ellipse cx="1072.500" cy="475" rx="2" ry="4.200" transform="rotate(20 1072.500 475)" fill="#868686"/><ellipse cx="1098" cy="487" rx="2.600" ry="4" transform="rotate(20 1098 487)" fill="#f4f4f4"/>
<ellipse cx="1129" cy="366" rx="80" ry="75" fill="#dddddd" stroke="#b4b4b4" stroke-width="1.600"/>
<ellipse cx="1128" cy="367" rx="72" ry="69" fill="#d4d4d4" stroke="#bcbcbc" stroke-width="1.400"/>
<ellipse cx="1128" cy="368" rx="64" ry="62" fill="#e0e0e0" stroke="#b6b6b6" stroke-width="1.400"/>
<path d="M1078 425A80 75 0 0 1 1066 318" stroke="#a6a6a6" stroke-width="7" fill="none" filter="url(#b2)"/>
<path d="M1150 296A72 69 0 0 1 1199 380" stroke="#ececec" stroke-width="5" fill="none" filter="url(#b2)"/>
<ellipse cx="1129.300" cy="370.800" rx="56" ry="56.500" fill="url(#gWall)" stroke="#bdbdbd" stroke-width="1"/>
<circle cx="1147" cy="305.500" r="3.600" fill="#e4e4e4" stroke="#a8a8a8" stroke-width="0.800"/><circle cx="1175.500" cy="420.500" r="3.600" fill="#e4e4e4" stroke="#a8a8a8" stroke-width="0.800"/><ellipse cx="1063" cy="385" rx="4.500" ry="3" transform="rotate(-30 1063 385)" fill="#e4e4e4" stroke="#a8a8a8" stroke-width="0.800"/>
<path d="M1062 312C1055 296 1058 280 1075 276.500C1092 276 1098 284 1101 296L1085 301Z" fill="#dedede" stroke="#b8b8b8" stroke-width="1.200"/>
<ellipse cx="1076" cy="287" rx="8.500" ry="5" transform="rotate(-8 1076 287)" fill="#adadad"/>
<circle cx="1039" cy="217" r="35.2" fill="url(#gLug)"/>
<circle cx="1248" cy="222" r="31" fill="url(#gLug)"/>
<circle cx="1350" cy="438.5" r="31" fill="url(#gLug)"/>
<circle cx="1133" cy="650" r="35" fill="url(#gLug)"/>
<path d="M665.5 142.3V688.3M694.7 142.3V688.3M723.9 142.3V688.3M753.1 142.3V688.3M782.3 142.3V688.3M811.5 142.3V688.3M840.7 142.3V688.3M869.9 142.3V688.3M899.1 142.3V688.3M928.3 142.3V688.3M957.5 142.3V688.3M986.7 142.3V688.3M1015.9 142.3V688.3M1045.1 142.3V688.3M1074.3 142.3V688.3M1103.5 142.3V688.3M1132.7 142.3V688.3M1161.9 142.3V688.3M1191.1 142.3V688.3M1220.3 142.3V688.3M1249.5 142.3V688.3M1278.7 142.3V688.3M1307.9 142.3V688.3M1337.1 142.3V688.3M1366.3 142.3V688.3M1395.5 142.3V688.3M1424.7 142.3V688.3M1453.9 142.3V688.3M1483.1 142.3V688.3M1512.3 142.3V688.3M1541.5 142.3V688.3M664.5 146.6H1557.5M664.5 175.8H1557.5M664.5 205.0H1557.5M664.5 234.2H1557.5M664.5 263.4H1557.5M664.5 292.6H1557.5M664.5 321.8H1557.5M664.5 351.0H1557.5M664.5 380.2H1557.5M664.5 409.4H1557.5M664.5 438.6H1557.5M664.5 467.8H1557.5M664.5 497.0H1557.5M664.5 526.2H1557.5M664.5 555.4H1557.5M664.5 584.6H1557.5M664.5 613.8H1557.5M664.5 643.0H1557.5M664.5 672.2H1557.5" stroke="#b2b2c8" stroke-width="0.9" fill="none" opacity="0.40"/><path d="M664.5 205H1103.500" stroke="#d9959c" stroke-width="1"/><path d="M1103.500 142.3V205" stroke="#86c492" stroke-width="1"/>
</g>
<path d="M1103 322.600C1085 326 1074 345 1073.400 372C1074 400 1092 425 1136 427.300C1150 418 1160 398 1160.600 375C1159 345 1135 324 1103 322.600Z" fill="#2a2a2a"/>
<ellipse cx="1038.800" cy="217.300" rx="17.200" ry="18.500" fill="#c4c4c4"/><path d="M1040 202C1050 206 1054 218 1049 232" stroke="#ececec" stroke-width="2" fill="none" filter="url(#b1)"/>
<ellipse cx="1032.500" cy="220.700" rx="10" ry="14" transform="rotate(-14 1032.500 220.700)" fill="#2a2a2a"/>
<ellipse cx="1250" cy="221.500" rx="16.500" ry="17" fill="#c6c6c6"/>
<ellipse cx="1247.500" cy="221.200" rx="13.500" ry="15.800" transform="rotate(-12 1247.500 221.200)" fill="#2a2a2a"/>
<circle cx="1351" cy="438" r="17.500" fill="#cfcfcf"/>
<circle cx="1350" cy="438.500" r="15.800" fill="#2a2a2a"/>
<ellipse cx="1133" cy="651" rx="19.500" ry="18.500" fill="#c9c9c9"/>
<ellipse cx="1131" cy="650" rx="15" ry="16.500" fill="#2a2a2a"/>
<g clip-path="url(#hc)" opacity="0.55"><path d="M665.5 142.3V688.3M694.7 142.3V688.3M723.9 142.3V688.3M753.1 142.3V688.3M782.3 142.3V688.3M811.5 142.3V688.3M840.7 142.3V688.3M869.9 142.3V688.3M899.1 142.3V688.3M928.3 142.3V688.3M957.5 142.3V688.3M986.7 142.3V688.3M1015.9 142.3V688.3M1045.1 142.3V688.3M1074.3 142.3V688.3M1103.5 142.3V688.3M1132.7 142.3V688.3M1161.9 142.3V688.3M1191.1 142.3V688.3M1220.3 142.3V688.3M1249.5 142.3V688.3M1278.7 142.3V688.3M1307.9 142.3V688.3M1337.1 142.3V688.3M1366.3 142.3V688.3M1395.5 142.3V688.3M1424.7 142.3V688.3M1453.9 142.3V688.3M1483.1 142.3V688.3M1512.3 142.3V688.3M1541.5 142.3V688.3M664.5 146.6H1557.5M664.5 175.8H1557.5M664.5 205.0H1557.5M664.5 234.2H1557.5M664.5 263.4H1557.5M664.5 292.6H1557.5M664.5 321.8H1557.5M664.5 351.0H1557.5M664.5 380.2H1557.5M664.5 409.4H1557.5M664.5 438.6H1557.5M664.5 467.8H1557.5M664.5 497.0H1557.5M664.5 526.2H1557.5M664.5 555.4H1557.5M664.5 584.6H1557.5M664.5 613.8H1557.5M664.5 643.0H1557.5M664.5 672.2H1557.5" stroke="#303035" stroke-width="1" fill="none"/></g>
<circle cx="1488.800" cy="210" r="56" fill="none" stroke="#a27753" stroke-width="3.100"/><circle cx="1488.800" cy="210" r="37.300" fill="none" stroke="#9a9a9a" stroke-width="0.8"/><path d="M1434 210H1541.700M1488.800 157V264.700" stroke="#a8a8a8" stroke-width="0.8"/>
<rect x="1468" y="265.700" width="40.500" height="12.800" rx="2.500" fill="#575757"/>
<text x="1488.300" y="275.300" font-size="9" fill="#bcbcbc" text-anchor="middle" font-family="Liberation Sans, sans-serif">Снизу</text>
<path d="M698 646.500V578M698 578.500L694.300 595.500H701.700Z" stroke="#e8e8e8" stroke-width="1" fill="none"/><rect x="690.500" y="646.500" width="15" height="15" fill="none" stroke="#e8e8e8" stroke-width="1"/><path d="M664.500 654H690.500" stroke="#e8e8e8" stroke-width="1"/>
<path d="M693.800 555.500L698 561L702.200 555.500M698 561V566.500" stroke="#e8e8e8" stroke-width="1" fill="none"/>
</g></svg>
<div class="a" style="left:670px;top:146.5px;width:21.700000000000045px;height:13.3px;background:#4f4f4f;border-radius:3px"></div>
<div class="t" style="left:600.85px;top:147.5px;width:160px;text-align:center;font-size:8.9px;color:#a2a2a2;">+</div>
<div class="a" style="left:694px;top:146.5px;width:40px;height:13.3px;background:#4f4f4f;border-radius:3px"></div>
<div class="t" style="left:634.0px;top:147.5px;width:160px;text-align:center;font-size:8.9px;color:#a2a2a2;">Снизу</div>
<div class="a" style="left:736.4px;top:146.5px;width:75.60000000000002px;height:13.3px;background:#4f4f4f;border-radius:3px"></div>
<div class="t" style="left:694.2px;top:147.5px;width:160px;text-align:center;font-size:8.9px;color:#a2a2a2;">Тонированный</div>
<div class="a" style="left:814.3px;top:146.5px;width:128.4000000000001px;height:13.3px;background:#4f4f4f;border-radius:3px"></div>
<div class="t" style="left:798.5px;top:147.5px;width:160px;text-align:center;font-size:8.9px;color:#a2a2a2;">--- нет связанных видов ---</div>
<!-- p6_dialog -->
<div class="a" style="left:690.8px;top:270.8px;width:223.2px;height:247.2px;background:#5c5c5c;border-radius:7px 7px 6px 6px;overflow:hidden;box-shadow:0 0 0 0.600px #6a6a6a"><div class="a" style="left:0;top:0;width:100%;height:24px;background:#f3f3f3"></div></div>
<div class="t" style="left:697.5px;top:277px;font-size:9.3px;color:#7c7c7c;">Новая сессия</div>
<svg style="left:897px;top:278px" width="10" height="10"><path d="M0.800 0.800l8 8M8.800 0.800l-8 8" stroke="#777" stroke-width="0.9"/></svg>
<div class="t" style="left:699px;top:308.3px;font-size:8.85px;color:#ececec;">Имя:</div>
<div class="a" style="left:761.6px;top:304.6px;width:143.1px;height:17.8px;background:#5c5c5c;border:1px solid #707070"></div>
<div class="t" style="left:763.4px;top:308.3px;font-size:8.9px;color:#ececec;">LEICA AT960</div>
<div class="t" style="left:699px;top:331.0px;font-size:8.85px;color:#ececec;">Пояснение:</div>
<div class="a" style="left:761.6px;top:327.3px;width:143.1px;height:17.8px;background:#5c5c5c;border:1px solid #707070"></div>
<div class="t" style="left:763.4px;top:331.0px;font-size:8.9px;color:#ececec;">Корпус</div>
<div class="t" style="left:699px;top:353.7px;font-size:8.85px;color:#ececec;">Устройство:</div>
<div class="a" style="left:761.6px;top:350.0px;width:104px;height:17.8px;background:#5c5c5c;border:1px solid #707070"></div>
<div class="t" style="left:763.4px;top:353.7px;font-size:8.9px;color:#a9a9a9;">Leica AT960</div>
<svg style="left:870px;top:352.5px" width="36" height="13"><path d="M2.200 2.200l8.400 8.400M10.600 2.200l-8.400 8.400" stroke="#f4f4f4" stroke-width="1.500"/><rect x="22.500" y="9" width="1.600" height="1.600" fill="#eee"/><rect x="25.700" y="9" width="1.600" height="1.600" fill="#eee"/><rect x="28.900" y="9" width="1.600" height="1.600" fill="#eee"/></svg>
<div class="t" style="left:699px;top:376.40000000000003px;font-size:8.85px;color:#ececec;">Температура:</div>
<div class="a" style="left:761.6px;top:372.70000000000005px;width:143.1px;height:17.8px;background:#5c5c5c;border:1px solid #707070"></div>
<div class="t" style="left:763.4px;top:376.40000000000003px;font-size:8.9px;color:#ececec;">23</div>
<div class="t" style="left:699px;top:399.1px;font-size:8.85px;color:#ececec;">Влажность:</div>
<div class="a" style="left:761.6px;top:395.40000000000003px;width:143.1px;height:17.8px;background:#5c5c5c;border:1px solid #707070"></div>
<div class="t" style="left:763.4px;top:399.1px;font-size:8.9px;color:#ececec;">60</div>
<div class="t" style="left:699px;top:421.8px;font-size:8.85px;color:#ececec;">Давление :</div>
<div class="a" style="left:761.6px;top:418.1px;width:143.1px;height:17.8px;background:#5c5c5c;border:1px solid #707070"></div>
<div class="t" style="left:763.4px;top:421.8px;font-size:8.9px;color:#ececec;">744</div>
<div class="t" style="left:699px;top:444.5px;font-size:8.85px;color:#ececec;">Созданный в:</div>
<div class="a" style="left:761.6px;top:440.8px;width:143.1px;height:17.8px;background:#5c5c5c;border:1px solid #707070"></div>
<div class="a" style="left:891.8px;top:441.6px;width:12.3px;height:16.7px;background:#616161;border-right:1.2px solid #303030;border-bottom:2px solid #303030;border-left:1px solid #6c6c6c"></div>
<svg style="left:896px;top:448.3px" width="5" height="3"><path d="M0 0h4l-2 2z" fill="#7a7a7a"/></svg>
<div class="t" style="left:763.6px;top:444.5px;font-size:9.05px;color:#ececec;">30.08.2024</div>
<div class="t" style="left:699px;top:467.2px;font-size:8.85px;color:#ececec;">Обновлено в:</div>
<div class="a" style="left:761.6px;top:463.5px;width:143.1px;height:17.8px;background:#5c5c5c;border:1px solid #707070"></div>
<div class="a" style="left:891.8px;top:464.3px;width:12.3px;height:16.7px;background:#616161;border-right:1.2px solid #303030;border-bottom:2px solid #303030;border-left:1px solid #6c6c6c"></div>
<svg style="left:896px;top:471.0px" width="5" height="3"><path d="M0 0h4l-2 2z" fill="#7a7a7a"/></svg>
<div class="t" style="left:763.6px;top:467.2px;font-size:9.05px;color:#ececec;">30.08.2024</div>
<div class="a" style="left:699.4px;top:491.5px;width:98.60000000000002px;height:17.3px;background:#5c5c5c;border:1px solid #b4b4b4"></div>
<div class="t" style="left:708.7px;top:494.3px;width:80px;text-align:center;font-size:8.9px;color:#f0f0f0;">OK</div>
<div class="a" style="left:807px;top:491.5px;width:97.79999999999995px;height:17.3px;background:#5c5c5c;border:1px solid #b4b4b4"></div>
<div class="t" style="left:815.9px;top:494.3px;width:80px;text-align:center;font-size:8.9px;color:#f0f0f0;">Отмена</div>
<!-- p7_cmd -->
<div class="a" style="left:284px;top:125.2px;width:3.7px;height:731px;background:#4a4a4a;"></div>
<div class="a" style="left:658.3px;top:125.2px;width:3.7px;height:588px;background:#4a4a4a;"></div>
<div class="a" style="left:285px;top:707.5px;width:378px;height:4px;background:#4a4a4a;"></div>
<div class="a" style="left:287.8px;top:707.9px;width:1272.2px;height:148.1px;background:#4b4b4b;"></div>
<div class="a" style="left:303.6px;top:712.8px;width:1256.4px;height:128.7px;background:#5c5c5c;"></div>
<div class="a" style="left:287.6px;top:711.2px;width:14.5px;height:144.8px;background:#808080;"></div>
<svg style="left:290px;top:715px" width="10" height="26"><path d="M1.200 1.200l6.600 6.600M7.800 1.200l-6.600 6.600" stroke="#fff" stroke-width="1.400"/><path d="M3 16h4M3.500 16v4.500M6.500 16v4.500M1.800 20.500h6.400M5 20.500v3.500" stroke="#fff" stroke-width="0.900" fill="none"/><rect x="5.500" y="16.500" width="1.300" height="4" fill="#fff"/></svg>
<div class="t" style="left:289.5px;top:855px;font-size:8.800px;color:#d6d6d6;transform-origin:0 0;transform:rotate(-90deg);line-height:11px">Командная строка</div>
<div class="a" style="left:302px;top:712.800px;width:1255px;height:128.700px;overflow:hidden"><div class="t" style="left:2.700px;top:-7.189999999999932px;font-family:'Liberation Mono',monospace;font-size:9.450px;line-height:11.330px;color:#e6e6e6">_ &nbsp; &nbsp; &nbsp; &nbsp;_ &nbsp; _ &nbsp; &nbsp; &nbsp; &nbsp; &nbsp; &nbsp; &nbsp; &nbsp;. &nbsp; &nbsp; &nbsp;..</div>
<div class="t" style="left:2.700px;top:4.140000000000068px;font-family:'Liberation Mono',monospace;font-size:9.450px;line-height:11.330px;color:#e6e6e6">PC_METROLOGY_CLOSE_DB - Закрытие БД</div>
<div class="t" style="left:2.700px;top:15.470000000000066px;font-family:'Liberation Mono',monospace;font-size:9.450px;line-height:11.330px;color:#e6e6e6">PC_METROLOGY_OPEN_DB - Открытие БД</div>
<div class="t" style="left:2.700px;top:26.800000000000065px;font-family:'Liberation Mono',monospace;font-size:9.450px;line-height:11.330px;color:#e6e6e6">PC_METROLOGY_MOVE_OBJECT - Трансформация объектов</div>
<div class="t" style="left:2.700px;top:38.13000000000007px;font-family:'Liberation Mono',monospace;font-size:9.450px;line-height:11.330px;color:#e6e6e6">Облака точек не найдены</div>
<div class="t" style="left:2.700px;top:49.460000000000065px;font-family:'Liberation Mono',monospace;font-size:9.450px;line-height:11.330px;color:#e6e6e6">Команда:</div>
<div class="t" style="left:2.700px;top:72.12000000000008px;font-family:'Liberation Mono',monospace;font-size:9.450px;line-height:11.330px;color:#e6e6e6">PC_METROLOGY_MOVE_OBJECT - Трансформация объектов</div>
<div class="t" style="left:2.700px;top:83.45000000000007px;font-family:'Liberation Mono',monospace;font-size:9.450px;line-height:11.330px;color:#e6e6e6">PC_METROLOGY_CREATE_DB - Создание БД</div>
<div class="t" style="left:2.700px;top:94.78000000000007px;font-family:'Liberation Mono',monospace;font-size:9.450px;line-height:11.330px;color:#e6e6e6">Автосохранение: C:\Users\yakovlev\AppData\Local\Temp\test1.prj(NEW)(18-20-29_30.08.2024).autosave</div>
<div class="t" style="left:2.700px;top:106.11000000000007px;font-family:'Liberation Mono',monospace;font-size:9.450px;line-height:11.330px;color:#e6e6e6">PC_METROLOGY_TREE - Панель данных</div>
<div class="t" style="left:2.700px;top:117.44000000000007px;font-family:'Liberation Mono',monospace;font-size:9.450px;line-height:11.330px;color:#e6e6e6">PC_METROLOGY_TREE - Панель данных</div></div>
<div class="a" style="left:303.6px;top:843.5px;width:1256.4px;height:12.5px;background:#5b5b5b;"></div>
<div class="t" style="left:304.700px;top:844.300px;font-family:'Liberation Mono',monospace;font-size:9.450px;line-height:11.330px;color:#e6e6e6">Команда:</div>
<div class="a" style="left:1px;top:856.2px;width:1559px;height:18.2px;background:#4a4a4a;"></div>
<div class="a" style="left:0px;top:874.4px;width:1560px;height:3px;background:#ffffff;"></div>
<div class="a" style="left:1558.6px;top:0px;width:2px;height:877px;background:#ffffff;"></div>
<div class="a" style="left:0px;top:0px;width:1px;height:877px;background:#ffffff;"></div>
<div class="a" style="left:1556.2px;top:394.3px;width:2.3px;height:72.3px;background:#ffffff;"></div>
<div class="t" style="left:3.8px;top:859.6px;font-size:8.8px;color:#ececec;">94.5139,-113.2569,0.0000</div>
<div class="a" style="left:115.5px;top:858px;width:1px;height:15px;background:#5e5e5e;"></div>
<div class="t" style="left:114.0px;top:859.8px;width:40px;text-align:center;font-size:8.4px;color:#e8e8e8;">ШАГ</div>
<div class="a" style="left:150px;top:857.3px;width:40.80000000000001px;height:16.2px;background:#48679a;border:1px solid #5b8bd8"></div><div class="t" style="left:110.4px;top:859.8px;width:120px;text-align:center;font-size:8.4px;color:#f2f2f2;">СЕТКА</div>
<div class="a" style="left:190.8px;top:857.3px;width:63.39999999999998px;height:16.2px;background:#48679a;border:1px solid #5b8bd8"></div><div class="t" style="left:162.5px;top:859.8px;width:120px;text-align:center;font-size:8.4px;color:#f2f2f2;">оПРИВЯЗКА</div>
<div class="a" style="left:254.2px;top:857.3px;width:78.40000000000003px;height:16.2px;background:#48679a;border:1px solid #5b8bd8"></div><div class="t" style="left:233.39999999999998px;top:859.8px;width:120px;text-align:center;font-size:8.4px;color:#f2f2f2;">3D оПРИВЯЗКА</div>
<div class="a" style="left:332.6px;top:857.3px;width:68.89999999999998px;height:16.2px;background:#48679a;border:1px solid #5b8bd8"></div><div class="t" style="left:307.05px;top:859.8px;width:120px;text-align:center;font-size:8.4px;color:#f2f2f2;">ОТС-ОБЪЕКТ</div>
<div class="a" style="left:401.5px;top:857.3px;width:66.69999999999999px;height:16.2px;background:#48679a;border:1px solid #5b8bd8"></div><div class="t" style="left:374.85px;top:859.8px;width:120px;text-align:center;font-size:8.4px;color:#f2f2f2;">ОТС-ПОЛЯР</div>
<div class="a" style="left:506px;top:857.3px;width:61.39999999999998px;height:16.2px;background:#48679a;border:1px solid #5b8bd8"></div><div class="t" style="left:476.70000000000005px;top:859.8px;width:120px;text-align:center;font-size:8.4px;color:#f2f2f2;">ДИН-ВВОД</div>
<div class="a" style="left:604px;top:857.3px;width:29.299999999999955px;height:16.2px;background:#48679a;border:1px solid #5b8bd8"></div><div class="t" style="left:558.65px;top:859.8px;width:120px;text-align:center;font-size:8.4px;color:#f2f2f2;">ВЕС</div>
<div class="a" style="left:633.3px;top:857.3px;width:68.20000000000005px;height:16.2px;background:#48679a;border:1px solid #5b8bd8"></div><div class="t" style="left:607.4px;top:859.8px;width:120px;text-align:center;font-size:8.4px;color:#f2f2f2;">ШТРИХОВКА</div>
<div class="t" style="left:467.0px;top:859.8px;width:40px;text-align:center;font-size:8.4px;color:#e8e8e8;">ОРТО</div>
<div class="t" style="left:564.0px;top:859.8px;width:40px;text-align:center;font-size:8.4px;color:#e8e8e8;">ИЗО</div>
<div class="a" style="left:600.5px;top:858px;width:1px;height:15px;background:#5e5e5e;"></div>
<div class="t" style="left:1049.3px;top:859.6px;font-size:8.9px;color:#ececec;">МОДЕЛЬ</div>
<div class="t" style="left:1310.0px;top:859.6px;width:60px;text-align:center;font-size:8.8px;color:#ececec;">m1:100</div>
<!-- p8_sticons -->
<svg style="left:1080px;top:856px" width="478" height="18" viewBox="1080 856 478 18">
<path d="M1088.3 858v15" stroke="#606060" stroke-width="1"/>
<path d="M1105.8 858v15" stroke="#606060" stroke-width="1"/>
<path d="M1196.7 858v15" stroke="#606060" stroke-width="1"/>
<path d="M1214.2 858v15" stroke="#606060" stroke-width="1"/>
<path d="M1375.8 858v15" stroke="#606060" stroke-width="1"/>
<path d="M1399.5 858v15" stroke="#606060" stroke-width="1"/>
<path d="M1423.3 858v15" stroke="#606060" stroke-width="1"/>
<path d="M1446.7 858v15" stroke="#606060" stroke-width="1"/>
<path d="M1470.3 858v15" stroke="#606060" stroke-width="1"/>
<path d="M1493.3 858v15" stroke="#606060" stroke-width="1"/>
<rect x="1091" y="866" width="5" height="4.500" fill="none" stroke="#c4c4c4" stroke-width="0.9"/><path d="M1092 866v-1.500a1.500 1.500 0 0 1 3 0" stroke="#c4c4c4" stroke-width="0.9" fill="none"/><rect x="1097" y="863" width="5" height="4.500" fill="none" stroke="#c4c4c4" stroke-width="0.9"/><path d="M1098 863v-1.500a1.500 1.500 0 0 1 3 0v1.500" stroke="#c4c4c4" stroke-width="0.9" fill="none"/>
<path d="M1108.500 860.300h9.800v8h-2.500l-2.400 3l-2.400-3h-2.500z" fill="#d6d6d6"/><path d="M1111 868.500h5l-2.500 2.800z" fill="#4a4a4a" stroke="#e8e8e8" stroke-width="0.700"/>
<path d="M1189.500 864.500h4.500l-2.250 2.600z" fill="#565656"/>
<path d="M1202 859.500a3.300 3.300 0 0 1 2 5.900v1.600h-4v-1.600a3.300 3.300 0 0 1 2-5.900z" fill="#f0e6a0"/><rect x="1200.500" y="867.500" width="3" height="1.800" fill="#b8b8b8"/><path d="M1199 870.500h4M1206 861h5.500v4" stroke="#c8c8c8" stroke-width="0.8" fill="none"/>
<path transform="translate(1207 864) scale(0.75)" d="M0 0v9.500l2.200-2l1.700 3.600l1.600-0.700l-1.700-3.500l3-0.200z" fill="#ffffff"/>
<path d="M1223 859.700a4 4 0 0 1 2.400 7.200v1.800h-4.800v-1.800a4 4 0 0 1 2.400-7.200z" fill="#e2e2e2"/><rect x="1221" y="869.300" width="4" height="2.400" fill="#a8a8a8"/>
<rect x="1232.2" y="857.500" width="24.5" height="15.800" fill="#48679a" stroke="#5b8bd8" stroke-width="0.9"/>
<rect x="1256.7" y="857.500" width="23.299999999999955" height="15.800" fill="#48679a" stroke="#5b8bd8" stroke-width="0.9"/>
<rect x="1280" y="857.500" width="23.299999999999955" height="15.800" fill="#48679a" stroke="#5b8bd8" stroke-width="0.9"/>
<circle cx="1246" cy="865.500" r="4.800" fill="#7a3038" stroke="#d03a44" stroke-width="1"/>
<path transform="translate(1244.3 861.3) scale(0.72)" d="M0 0v9.500l2.200-2l1.700 3.600l1.600-0.700l-1.700-3.500l3-0.200z" fill="#ffffff"/>
<path transform="translate(1264 859.5) scale(0.9)" d="M0 0v9.500l2.200-2l1.700 3.600l1.600-0.700l-1.700-3.500l3-0.200z" fill="#ffffff"/>
<rect x="1268.500" y="867" width="6" height="4.500" fill="#3a3a3a" stroke="#f0f0f0" stroke-width="0.8"/><path d="M1269.500 868.500h4M1269.500 870h4" stroke="#f0f0f0" stroke-width="0.600"/>
<path d="M1286.500 859.500v11h10M1284.800 861.500l1.700-2.200l1.700 2.200M1294.500 868.800l2.200 1.700l-2.200 1.700" stroke="#f0f0f0" stroke-width="0.9" fill="none"/><path d="M1295 860l-2.300 4h2l-1.600 4" stroke="#e8e8e8" stroke-width="1.100" fill="none"/>
<path d="M1385.800 866.500l-2-2.300c-0.800-1 0.500-2 1.400-1.100l1.200 1.200v-3.800c0-1.100 1.500-1.100 1.500 0v-1c0-1.100 1.600-1.100 1.600 0v0.600c0-1.100 1.600-1.100 1.600 0v0.900c0-1 1.500-1 1.500 0v5.500c0 3-1.200 4.700-3.200 4.700h-1.600c-1.300 0-2-0.700-2.800-1.800z" fill="#f6f6f6"/>
<circle cx="1412.300" cy="864.300" r="3.900" fill="#f4f8ff" stroke="#cfe0f8" stroke-width="0.8"/><path d="M1415.200 867.300l4 4" stroke="#5f98ea" stroke-width="1.800"/>
<rect x="1430.800" y="859.200" width="13.400" height="13.300" fill="#6fa8f5"/><circle cx="1436.800" cy="865" r="3.300" fill="#9cc4fb" stroke="#2e4f86" stroke-width="1"/><path d="M1439.300 867.600l3 3" stroke="#2e4f86" stroke-width="1.400"/>
<path d="M1454.500 868.500v-8.500h10.500v4" stroke="#6fa8f5" stroke-width="1.300" fill="none"/><circle cx="1462.300" cy="867.300" r="2.900" fill="#4a4a4a" stroke="#e4e4e4" stroke-width="0.9"/><path d="M1464.500 869.500l2.400 2.400" stroke="#e4e4e4" stroke-width="1.100"/>
<ellipse cx="1484.500" cy="866.500" rx="6" ry="2.800" fill="none" stroke="#c0c0c0" stroke-width="0.9"/><path d="M1484.500 859.500v12M1483 861l1.500-1.800l1.500 1.800" stroke="#c0c0c0" stroke-width="0.9" fill="none"/>
<path d="M1503.200 864.500a4.600 4.600 0 0 1 8-1.500M1511.800 867.500a4.600 4.600 0 0 1 -8 1.500" stroke="#a8e88a" stroke-width="1.900" fill="none"/><path d="M1512.800 860.500v4h-4zM1502.200 871.500v-4h4z" fill="#a8e88a"/>
<rect x="1517.100" y="857.100" width="18.900" height="16.700" fill="#50627f"/><path d="M1520 866v-6h9.500" stroke="#e8e8e8" stroke-width="1" fill="none"/><path d="M1520 860h9.500" stroke="#6fa8f5" stroke-width="1.600"/><rect x="1525" y="866" width="7" height="5" fill="#dcdcdc"/><path d="M1526.500 866v-1.700a2 2 0 0 1 4 0v1.700" stroke="#dcdcdc" stroke-width="1" fill="none"/>
<rect x="1545" y="861.300" width="8.600" height="8.300" fill="#00a2e0" stroke="#bfe8f8" stroke-width="1.200"/><path d="M1542.800 862v-2.700h2.700M1555.700 862v-2.700h-2.700M1542.800 868.500v2.700h2.700M1555.700 868.500v2.700h-2.700" stroke="#f0f0f0" stroke-width="0.9" fill="none"/>
</svg>
</body></html>
